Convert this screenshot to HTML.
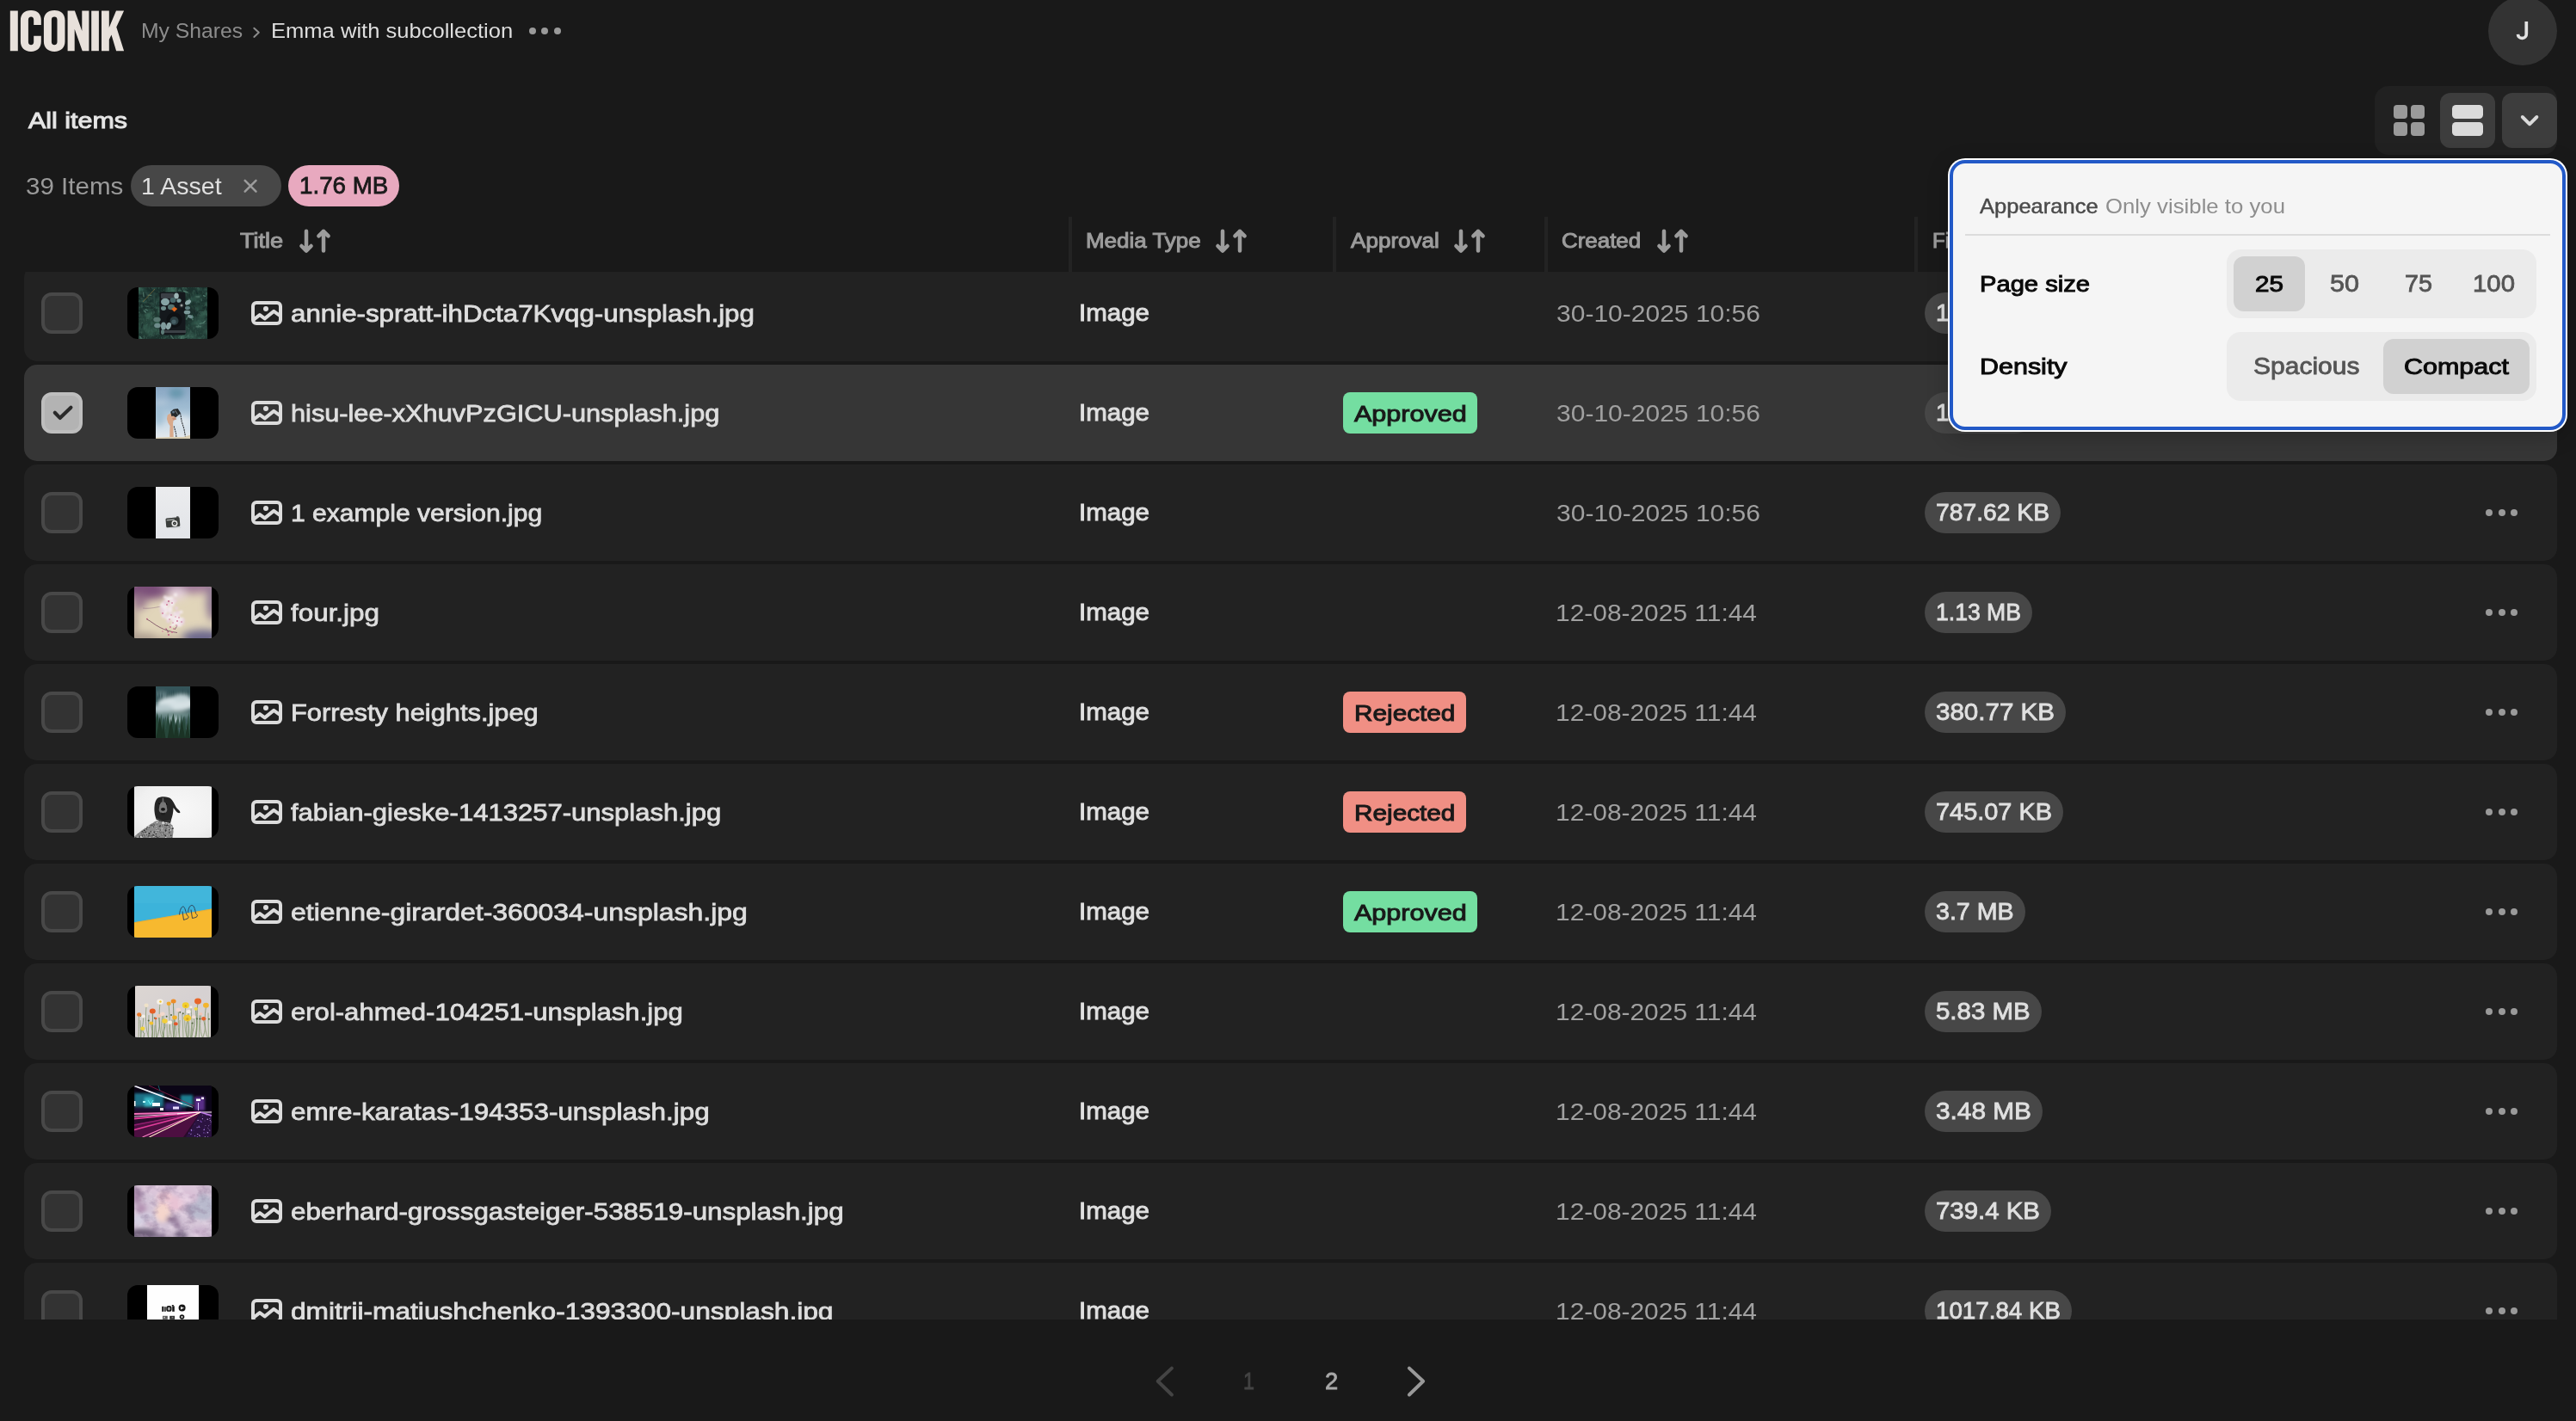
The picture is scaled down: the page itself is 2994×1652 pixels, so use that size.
<!DOCTYPE html>
<html><head><meta charset="utf-8"><title>iconik</title>
<style>
*{box-sizing:border-box;margin:0;padding:0}
html,body{width:2994px;height:1652px;overflow:hidden;background:#191919}
body{position:relative;font-family:"Liberation Sans",sans-serif;color:#dedede}
.t{position:absolute;white-space:nowrap;transform-origin:0 50%;line-height:60px;height:60px;font-size:28.5px}
.abs{position:absolute}
.w5{font-size:27.5px;-webkit-text-stroke:0.8px currentColor}
.w6{font-size:27.5px;-webkit-text-stroke:0.9px currentColor}
.w7{font-size:26.5px;-webkit-text-stroke:1px currentColor}
.f24{font-size:24.5px}
.f24.w5{font-size:24px;-webkit-text-stroke:0.45px currentColor}
.f24.w6{font-size:23.5px;-webkit-text-stroke:1px currentColor}
.row{position:absolute;left:28px;width:2944px;height:112px;background:#222;border-radius:15px}
.row.sel{background:#363636}
.cb{position:absolute;left:20px;top:32px;width:48px;height:48px;border-radius:12px;border:4px solid #484848;background:#333}
.sel .cb{border-color:#bebebe;background:#b3b3b3}
.th{position:absolute;left:120px;top:26px;width:106px;height:60px;border-radius:12px;background:#000;overflow:hidden}
.th svg{position:absolute;top:0;height:60px;display:block}
.ico{position:absolute;left:264px;top:42px;width:36px;height:28px}
.badge{position:absolute;left:1533px;top:32px;height:48px;border-radius:8px}
.ok{background:#74dea1;width:156px}
.no{background:#f08f84;width:143px}
.pill{position:absolute;left:2209px;top:32px;height:48px;border-radius:24px;background:#474747}
.dots{position:absolute;left:2861px;top:52px;width:38px;height:8px}
.dots i,.dots:before,.dots:after{content:"";position:absolute;top:0;width:8px;height:8px;border-radius:50%;background:#9a9a9a}
.dots:before{left:0}.dots i{left:14.5px}.dots:after{left:29px}
.sep{position:absolute;top:252px;width:4px;height:64px;background:#232323}
</style></head><body>

<svg class="abs" style="left:0;top:0" width="160" height="72" viewBox="0 0 160 72"><g fill="#e8e1db">
<path d="M11.8 12.6h9v46.6h-9z"/>
<path d="M36 11.9c7.6 0 11.8 4.4 11.8 11.6v5.600h-8.600v-6.100c0-2.200-1.100-3.400-3.100-3.400s-3.200 1.200-3.200 3.400v25.800c0 2.200 1.200 3.400 3.200 3.400s3.100-1.200 3.100-3.400v-7h8.600v6.500c0 7.200-4.200 11.600-11.800 11.600s-12.100-4.400-12.100-11.600v-24.800c0-7.200 4.500-11.600 12.100-11.600z"/>
<path d="M63.200 11.900c7.700 0 12.300 4.400 12.300 11.600v24.800c0 7.200-4.600 11.600-12.300 11.600s-12.300-4.400-12.300-11.600v-24.800c0-7.200 4.600-11.600 12.300-11.600zm0 7.700c-2.100 0-3.300 1.200-3.300 3.400v25.800c0 2.200 1.200 3.400 3.300 3.400s3.300-1.200 3.300-3.400v-25.800c0-2.200-1.200-3.400-3.300-3.400z" fill-rule="evenodd"/>
<path d="M78.600 12.600h8.300l8.400 23.400v-23.400h8.100v46.600h-7.700l-9-25.400v25.400h-8.100z"/>
<path d="M106.200 12.600h8.700v46.600h-8.700z"/>
<path d="M118 12.600h8.800v19.400l8.200-19.400h9.100l-8.800 18.800 8.800 27.800h-9l-5.600-18.800-2.700 5.600v13.200h-8.800z"/>
</g></svg>

<span id="bc1" class="t f24" style="left:164.0px;top:5.5px;transform:scaleX(1.0094);color:#8c8c8c;">My Shares</span>
<svg class="abs" style="left:290px;top:28px" width="16" height="20" viewBox="0 0 16 20"><path d="M5.300 4.700L10.800 9.800L5.300 14.900" fill="none" stroke="#8c8c8c" stroke-width="2" stroke-linecap="round" stroke-linejoin="round"/></svg>
<span id="bc2" class="t f24" style="left:315.3px;top:5.5px;transform:scaleX(1.0430);color:#dedede;">Emma with subcollection</span>
<div class="dots" style="left:614.800px;top:31.600px;width:37px"><i style="left:14.400px"></i></div>
<div class="abs" style="left:2892px;top:-4px;width:80px;height:80px;border-radius:50%;background:#333"></div>
<svg class="abs" style="left:2920px;top:20px" width="24" height="32" viewBox="0 0 24 32"><path d="M16.300 5.100V19.300A4.900 4.900 0 0 1 6.500 19.800" fill="none" stroke="#e2e2e2" stroke-width="3.700"/></svg>
<span id="all" class="t w7" style="left:33.0px;top:110.0px;transform:scaleX(1.1484);color:#e6e6e6;">All items</span>
<div class="abs" style="left:2760px;top:100px;width:212px;height:80px;border-radius:16px;background:#212121"></div>
<div class="abs" style="left:2836px;top:108px;width:64px;height:64px;border-radius:12px;background:#3d3d3d"></div>
<div class="abs" style="left:2908px;top:108px;width:64px;height:64px;border-radius:12px;background:#3d3d3d"></div>
<svg class="abs" style="left:2760px;top:100px" width="212" height="80" viewBox="0 0 212 80">
<g fill="#9a9a9a"><rect x="22" y="22" width="16" height="16" rx="4"/><rect x="42" y="22" width="16" height="16" rx="4"/><rect x="22" y="42" width="16" height="16" rx="4"/><rect x="42" y="42" width="16" height="16" rx="4"/></g>
<g fill="#dadada"><rect x="90" y="22" width="36" height="16" rx="4.500"/><rect x="90" y="42" width="36" height="16" rx="4.500"/></g>
<path d="M171.800 36l8.300 8.300 8.300-8.300" fill="none" stroke="#dadada" stroke-width="3.900" stroke-linecap="round" stroke-linejoin="round"/>
</svg>

<span id="n39" class="t " style="left:29.5px;top:186.0px;transform:scaleX(1.0375);color:#9a9a9a;">39 Items</span>
<div class="abs" style="left:152px;top:192px;width:175px;height:48px;border-radius:24px;background:#474747"></div>
<span id="asset" class="t " style="left:164.2px;top:186.0px;transform:scaleX(1.0023);color:#e0e0e0;">1 Asset</span>
<svg class="abs" style="left:281px;top:206px" width="20" height="20" viewBox="0 0 20 20"><path d="M3.700 3.800l12.800 12.800M16.500 3.800l-12.800 12.800" stroke="#9c9c9c" stroke-width="2.500" stroke-linecap="round"/></svg>
<div class="abs" style="left:335px;top:192px;width:129px;height:48px;border-radius:24px;background:#e8a9bf"></div>
<span id="mb" class="t w5" style="left:348.2px;top:186.0px;transform:scaleX(1.0086);color:#1a1a1a;">1.76 MB</span>
<div class="abs" style="left:0;top:316px;width:2994px;height:1218px;overflow:hidden">
<div class="row" style="top:-8px">
<div class="cb"></div>
<div class="th"><svg style="left:13px;width:80px" viewBox="0 0 80 60" preserveAspectRatio="none"><defs><filter id="ba1" x="-30%" y="-30%" width="160%" height="160%"><feGaussianBlur stdDeviation="4"/></filter><filter id="ba2" x="-30%" y="-30%" width="160%" height="160%"><feGaussianBlur stdDeviation="0.5"/></filter><filter id="ba3" x="-30%" y="-30%" width="160%" height="160%"><feGaussianBlur stdDeviation="0.45"/></filter><filter id="ta1" x="0" y="0" width="100%" height="100%" color-interpolation-filters="sRGB"><feTurbulence type="fractalNoise" baseFrequency=".09 .11" numOctaves="3" seed="4"/><feColorMatrix values="0 0 0 0 .23  0 0 0 0 .40  0 0 0 0 .34  2.600 0 0 0 -1.000"/></filter><filter id="ta2" x="0" y="0" width="100%" height="100%" color-interpolation-filters="sRGB"><feTurbulence type="turbulence" baseFrequency=".35 .2" numOctaves="2" seed="9"/><feColorMatrix values="0 0 0 0 .33  0 0 0 0 .50  0 0 0 0 .44  3 0 0 0 -.8"/></filter><clipPath id="cp80013"><rect width="80" height="60"/></clipPath></defs><g clip-path="url(#cp80013)"><rect width="80" height="60" fill="#1b302c"/><rect width="80" height="60" filter="url(#ta1)"/><rect width="80" height="60" filter="url(#ta2)" opacity=".4"/><g filter="url(#ba1)" opacity=".55"><ellipse cx="12" cy="44" rx="14" ry="14" fill="#31564a"/><ellipse cx="70" cy="46" rx="13" ry="13" fill="#2a4b42"/><ellipse cx="68" cy="12" rx="12" ry="8" fill="#244039"/><ellipse cx="14" cy="10" rx="10" ry="8" fill="#15292a"/><ellipse cx="62" cy="30" rx="8" ry="8" fill="#142825"/></g><g filter="url(#ba2)"><path d="M52.1 4.3l5.1 1.6" stroke="#507a6c" stroke-width="1.300"/><path d="M72.8 12.9l0.7 3.2" stroke="#3b5f54" stroke-width="1.300"/><path d="M7.3 25.5l3.6 1.5" stroke="#507a6c" stroke-width="1.300"/><path d="M50.2 56.9l-0.8 3.1" stroke="#507a6c" stroke-width="1.300"/><path d="M17.7 33.4l2.2 2.8" stroke="#2c4a42" stroke-width="1.300"/><path d="M9.4 18.5l4.5 2.9" stroke="#1a2f2b" stroke-width="1.300"/><path d="M43.8 3.8l-1.8 4.6" stroke="#3b5f54" stroke-width="1.300"/><path d="M37.2 55.4l3.6 5.0" stroke="#4a6e62" stroke-width="1.300"/><path d="M70.0 43.8l-1.1 3.1" stroke="#4a6e62" stroke-width="1.300"/><path d="M27.4 56.0l5.6 0.7" stroke="#24413a" stroke-width="1.300"/><path d="M61.2 34.4l2.1 3.9" stroke="#4a6e62" stroke-width="1.300"/><path d="M5.5 5.6l0.5 5.6" stroke="#4a6e62" stroke-width="1.300"/><path d="M4.9 42.1l-1.4 5.6" stroke="#1a2f2b" stroke-width="1.300"/><path d="M71.0 20.8l2.4 4.9" stroke="#24413a" stroke-width="1.300"/><path d="M23.0 44.3l2.2 6.1" stroke="#24413a" stroke-width="1.300"/><path d="M6.4 27.0l2.3 2.7" stroke="#507a6c" stroke-width="1.300"/><path d="M56.5 59.2l-6.4 2.4" stroke="#1a2f2b" stroke-width="1.300"/><path d="M12.1 10.6l-1.5 2.7" stroke="#2c4a42" stroke-width="1.300"/><path d="M66.5 10.9l4.7 0.1" stroke="#4a6e62" stroke-width="1.300"/><path d="M76.2 41.4l-5.5 0.9" stroke="#507a6c" stroke-width="1.300"/><path d="M59.2 27.4l-3.7 2.7" stroke="#1a2f2b" stroke-width="1.300"/><path d="M50.7 3.7l-4.8 0.2" stroke="#3b5f54" stroke-width="1.300"/><path d="M8.8 36.0l3.6 0.0" stroke="#3b5f54" stroke-width="1.300"/><path d="M8.1 21.8l3.7 0.8" stroke="#3b5f54" stroke-width="1.300"/><path d="M76.4 36.1l5.9 2.4" stroke="#24413a" stroke-width="1.300"/><path d="M79.4 28.0l2.0 3.0" stroke="#24413a" stroke-width="1.300"/><path d="M60.0 44.4l-3.1 1.9" stroke="#24413a" stroke-width="1.300"/><path d="M1.8 57.1l2.4 5.2" stroke="#507a6c" stroke-width="1.300"/><path d="M73.1 45.5l-6.4 0.4" stroke="#4a6e62" stroke-width="1.300"/><path d="M61.8 32.0l2.0 3.3" stroke="#507a6c" stroke-width="1.300"/><path d="M64.9 59.1l-5.1 3.6" stroke="#2c4a42" stroke-width="1.300"/><path d="M59.2 13.6l0.1 5.9" stroke="#507a6c" stroke-width="1.300"/><path d="M79.2 47.4l4.0 4.2" stroke="#24413a" stroke-width="1.300"/><path d="M76.5 26.8l-6.8 0.3" stroke="#1a2f2b" stroke-width="1.300"/><path d="M18.1 11.8l0.4 6.9" stroke="#2c4a42" stroke-width="1.300"/><path d="M48.8 0.1l2.6 4.9" stroke="#1a2f2b" stroke-width="1.300"/><path d="M66.8 7.2l-4.6 3.8" stroke="#24413a" stroke-width="1.300"/><path d="M63.1 20.0l1.5 4.4" stroke="#1a2f2b" stroke-width="1.300"/><path d="M75.7 43.5l-3.1 0.1" stroke="#2c4a42" stroke-width="1.300"/><path d="M75.0 9.4l2.8 1.2" stroke="#507a6c" stroke-width="1.300"/><path d="M77.7 39.0l-2.5 2.5" stroke="#507a6c" stroke-width="1.300"/><path d="M78.9 11.7l3.8 0.3" stroke="#2c4a42" stroke-width="1.300"/><path d="M66.7 3.7l2.1 4.3" stroke="#1a2f2b" stroke-width="1.300"/><path d="M46.7 54.3l-5.6 3.4" stroke="#24413a" stroke-width="1.300"/><path d="M10.5 9.1l4.8 0.3" stroke="#507a6c" stroke-width="1.300"/><path d="M14.6 0.2l4.2 2.5" stroke="#2c4a42" stroke-width="1.300"/><path d="M58.0 33.4l-2.8 4.3" stroke="#4a6e62" stroke-width="1.300"/></g><path d="M5 17l14-15" stroke="#7a6a3a" stroke-width="1" opacity=".8"/><rect x="24.500" y="5.500" width="30" height="50" rx="2" fill="#14181c"/><rect x="26" y="7" width="15" height="6" rx="1" fill="#3a3f45"/><rect x="28" y="50" width="27" height="3" fill="#3b4146"/><circle cx="41.500" cy="38" r="9" fill="#0e1114"/><circle cx="41.500" cy="39" r="5" fill="#2c3e42"/><circle cx="41" cy="40" r="2.600" fill="#476066"/><g filter="url(#ba3)"><ellipse cx="31" cy="17" rx="5" ry="4.200" fill="#86a3a4"/><ellipse cx="44" cy="10" rx="2.800" ry="3.600" fill="#9db5b6"/><ellipse cx="40" cy="15" rx="3.500" ry="3" fill="#49686a"/><ellipse cx="47" cy="15.500" rx="2.600" ry="2.300" fill="#7f9fa0"/><ellipse cx="38" cy="23" rx="4" ry="3.200" fill="#55736f"/><ellipse cx="29" cy="24.500" rx="3" ry="2.400" fill="#6d8b8a"/><ellipse cx="57.500" cy="17.500" rx="3.800" ry="2.400" fill="#8daaab" transform="rotate(-35 57.500 17.500)"/><ellipse cx="57" cy="24" rx="3" ry="2" fill="#5f7e80"/><ellipse cx="56.500" cy="29" rx="3.800" ry="2.300" fill="#7a9899"/><ellipse cx="60" cy="34" rx="3.200" ry="1.800" fill="#6f8d8e" transform="rotate(25 60 34)"/><ellipse cx="21.500" cy="37.500" rx="4.200" ry="2.800" fill="#58766f"/><ellipse cx="22" cy="44.500" rx="3.800" ry="2.800" fill="#6e8c8b"/><ellipse cx="29" cy="45" rx="3" ry="4.500" fill="#7f9a9c"/><ellipse cx="35" cy="45" rx="2.800" ry="4.200" fill="#8aa4a6" transform="rotate(20 35 45)"/><ellipse cx="28" cy="52" rx="2" ry="3" fill="#5d7b78"/></g><circle cx="50" cy="21" r="2.800" fill="#23282c"/><circle cx="50" cy="21" r="1.500" fill="#9a9f9c"/><path d="M38.200 25.300l3.600-2.600 3.400 2.300-3.600 3.500z" fill="#e2681d"/></g></svg></div>
<svg class="ico" viewBox="0 0 36 28"><rect x="2" y="2" width="32" height="24" rx="4" fill="none" stroke="#dcdcdc" stroke-width="4"/><circle cx="17" cy="9" r="3" fill="#dcdcdc"/><path d="M2.500 21.800l7.400-5.700 5.800 4.300 10.500-8.500 7.300 5.300" fill="none" stroke="#dcdcdc" stroke-width="4" stroke-linejoin="round"/></svg>
<span id="t_annie" class="t w5" style="left:310.0px;top:26.5px;transform:scaleX(1.1372);color:#dedede;">annie-spratt-ihDcta7Kvqg-unsplash.jpg</span>
<span id="m_annie" class="t w6" style="left:1226.0px;top:26.0px;transform:scaleX(1.0728);color:#e0e0e0;">Image</span>
<span id="d_annie" class="t " style="left:1780.5px;top:26.0px;transform:scaleX(1.0532);color:#a0a0a0;">30-10-2025 10:56</span>
<div class="pill" style="width:129.3px"></div>
<span id="p_annie" class="t w5" style="left:2222.0px;top:26.0px;transform:scaleX(1.0086);color:#e0e0e0;">1.76 MB</span>
<div class="dots"><i></i></div>
</div>
<div class="row sel" style="top:108px">
<div class="cb"><svg style="position:absolute;left:-4px;top:-4px" width="48" height="48" viewBox="0 0 48 48"><path d="M15.800 23.700L21.700 29.900L34.400 17.800" fill="none" stroke="#2a2a2a" stroke-width="4.200" stroke-linecap="round" stroke-linejoin="round"/></svg></div>
<div class="th"><svg style="left:33px;width:40px" viewBox="0 0 40 60" preserveAspectRatio="none"><defs><linearGradient id="gh" x1="0" y1="0" x2="0" y2="1"><stop offset="0" stop-color="#8aa7c3"/><stop offset=".4" stop-color="#9fbcd2"/><stop offset=".75" stop-color="#cfdde8"/><stop offset="1" stop-color="#e4e9ee"/></linearGradient><filter id="bh1" x="-30%" y="-30%" width="160%" height="160%"><feGaussianBlur stdDeviation="3"/></filter><clipPath id="cp40033"><rect width="40" height="60"/></clipPath></defs><g clip-path="url(#cp40033)"><rect width="40" height="60" fill="url(#gh)"/><g filter="url(#bh1)"><ellipse cx="24" cy="7" rx="9" ry="6" fill="#6797ad"/><ellipse cx="6" cy="18" rx="9" ry="3" fill="#b9cbdb" opacity=".8"/><ellipse cx="30" cy="40" rx="12" ry="6" fill="#e3ebf0" opacity=".8"/><ellipse cx="4" cy="36" rx="5" ry="10" fill="#8fb4cb" opacity=".6"/></g><path d="M16.300 60.500v-10l.3-5.200-2.300-3.800-1.400-4.600.8-4.300 2.800-1.800 4.600.6 2.300 2.800-.6 3-2.200 1.200-.6 4.300.4 4.600.3 13.200z" fill="#d8a98b"/><path d="M19 36l4-.8 1.200 2.300-3.800 1.300z" fill="#c58f78"/><path d="M17.200 28.800l3.500-3 5-.8 3.300 5.200-5.600 5-3.200-1.600-1.800.4z" fill="#25282b"/><circle cx="20.500" cy="29" r="1.500" fill="#5f7488"/><path d="M22.500 27l3 4.800" stroke="#7f8688" stroke-width="1"/><path d="M28.600 30.500l1.600 9.500 2.800 9 1.900 11M21.200 45.500l2.300 8 .6 7" stroke="#33363a" stroke-width="1.100" fill="none" stroke-dasharray="2 .7"/><path d="M0 60v-1.300l16-.7h16l8-2.200v4.200z" fill="#d9cdb2"/></g></svg></div>
<svg class="ico" viewBox="0 0 36 28"><rect x="2" y="2" width="32" height="24" rx="4" fill="none" stroke="#dcdcdc" stroke-width="4"/><circle cx="17" cy="9" r="3" fill="#dcdcdc"/><path d="M2.500 21.800l7.400-5.700 5.800 4.300 10.500-8.500 7.300 5.300" fill="none" stroke="#dcdcdc" stroke-width="4" stroke-linejoin="round"/></svg>
<span id="t_hisu" class="t w5" style="left:310.0px;top:26.5px;transform:scaleX(1.1165);color:#dedede;">hisu-lee-xXhuvPzGICU-unsplash.jpg</span>
<span id="m_hisu" class="t w6" style="left:1226.0px;top:26.0px;transform:scaleX(1.0728);color:#e0e0e0;">Image</span>
<div class="badge ok"></div>
<span id="a_hisu" class="t w7" style="left:1545.6px;top:26.6px;transform:scaleX(1.1520);color:#191919;">Approved</span>
<span id="d_hisu" class="t " style="left:1780.5px;top:26.0px;transform:scaleX(1.0532);color:#a0a0a0;">30-10-2025 10:56</span>
<div class="pill" style="width:129.3px"></div>
<span id="p_hisu" class="t w5" style="left:2222.0px;top:26.0px;transform:scaleX(1.0086);color:#e0e0e0;">1.76 MB</span>
<div class="dots"><i></i></div>
</div>
<div class="row" style="top:224px">
<div class="cb"></div>
<div class="th"><svg style="left:33px;width:40px" viewBox="0 0 40 60" preserveAspectRatio="none"><defs><linearGradient id="gx" x1="0" y1="0" x2="0" y2="1"><stop offset="0" stop-color="#ebecee"/><stop offset="1" stop-color="#e2e4e8"/></linearGradient><clipPath id="cp40033"><rect width="40" height="60"/></clipPath></defs><g clip-path="url(#cp40033)"><rect width="40" height="60" fill="url(#gx)"/><ellipse cx="20.500" cy="47" rx="9" ry="1.200" fill="#cfd2d6"/><g transform="rotate(-5 20 41)"><rect x="11.800" y="35.800" width="16.200" height="10.800" rx="1.400" fill="#3a3d3b"/><rect x="13" y="37.400" width="9" height="1.500" fill="#9ea2a0"/><rect x="24.500" y="34.800" width="2.500" height="1.300" fill="#2c2e2d"/><circle cx="21.800" cy="42.600" r="3.500" fill="#e6e7e6"/><circle cx="21.800" cy="42.600" r="2" fill="#2b2d2c"/><circle cx="21.800" cy="42.600" r=".8" fill="#8c9190"/></g></g></svg></div>
<svg class="ico" viewBox="0 0 36 28"><rect x="2" y="2" width="32" height="24" rx="4" fill="none" stroke="#dcdcdc" stroke-width="4"/><circle cx="17" cy="9" r="3" fill="#dcdcdc"/><path d="M2.500 21.800l7.400-5.700 5.800 4.300 10.500-8.500 7.300 5.300" fill="none" stroke="#dcdcdc" stroke-width="4" stroke-linejoin="round"/></svg>
<span id="t_ex" class="t w5" style="left:310.0px;top:26.5px;transform:scaleX(1.0923);color:#dedede;">1 example version.jpg</span>
<span id="m_ex" class="t w6" style="left:1226.0px;top:26.0px;transform:scaleX(1.0728);color:#e0e0e0;">Image</span>
<span id="d_ex" class="t " style="left:1780.5px;top:26.0px;transform:scaleX(1.0532);color:#a0a0a0;">30-10-2025 10:56</span>
<div class="pill" style="width:158.0px"></div>
<span id="p_ex" class="t w5" style="left:2222.0px;top:26.0px;transform:scaleX(1.0277);color:#e0e0e0;">787.62 KB</span>
<div class="dots"><i></i></div>
</div>
<div class="row" style="top:340px">
<div class="cb"></div>
<div class="th"><svg style="left:8px;width:90px" viewBox="0 0 90 60" preserveAspectRatio="none"><defs><filter id="bf1" x="-30%" y="-30%" width="160%" height="160%"><feGaussianBlur stdDeviation="5"/></filter><filter id="bf2" x="-30%" y="-30%" width="160%" height="160%"><feGaussianBlur stdDeviation="0.9"/></filter><filter id="bf3" x="-30%" y="-30%" width="160%" height="160%"><feGaussianBlur stdDeviation="0.35"/></filter><clipPath id="cp90008"><rect width="90" height="60"/></clipPath></defs><g clip-path="url(#cp90008)"><rect width="90" height="60" fill="#e1d5ba"/><g filter="url(#bf1)"><ellipse cx="14" cy="2" rx="30" ry="13" fill="#7b4f79"/><ellipse cx="64" cy="-2" rx="34" ry="10" fill="#a17b9a"/><ellipse cx="6" cy="18" rx="9" ry="9" fill="#9b7a8f"/><ellipse cx="91" cy="18" rx="7" ry="22" fill="#8d7792"/><ellipse cx="80" cy="60" rx="26" ry="10" fill="#6c688c"/><ellipse cx="8" cy="62" rx="22" ry="8" fill="#a99a8d"/><ellipse cx="40" cy="64" rx="20" ry="6" fill="#b7a795"/><ellipse cx="50" cy="8" rx="10" ry="7" fill="#e6d2dd"/><ellipse cx="-2" cy="40" rx="5" ry="16" fill="#a8968f"/></g><path d="M14 37.500c6 3 10 7 16 10s12 5 20 6M47 50l4-6M40 53l-3-4" stroke="#7a4f63" stroke-width="1" fill="none" opacity=".85"/><path d="M10 25c8 1 16-1 26-3" stroke="#8c6a83" stroke-width=".8" fill="none" opacity=".6"/><g filter="url(#bf2)"><circle cx="36.2" cy="18.3" r="2.7" fill="#e9d3de"/><circle cx="33.7" cy="19.1" r="1.8" fill="#e9d3de"/><circle cx="36.3" cy="12.4" r="1.7" fill="#f6eef0"/><circle cx="44.1" cy="20.5" r="2.7" fill="#f3e8ea"/><circle cx="37.8" cy="15.0" r="2.1" fill="#efe0e6"/><circle cx="35.7" cy="12.3" r="1.7" fill="#f3e8ea"/><circle cx="42.1" cy="19.5" r="1.6" fill="#e9d3de"/><circle cx="38.6" cy="21.2" r="1.8" fill="#efe0e6"/><circle cx="38.1" cy="13.8" r="2.4" fill="#e9d3de"/><circle cx="38.8" cy="14.0" r="2.3" fill="#f3e8ea"/><circle cx="40.1" cy="14.0" r="1.9" fill="#f6eef0"/><circle cx="45.9" cy="17.9" r="1.7" fill="#f3e8ea"/><circle cx="43.2" cy="14.1" r="2.7" fill="#f3e8ea"/><circle cx="43.0" cy="25.0" r="1.7" fill="#e9d3de"/><circle cx="44.9" cy="16.6" r="1.7" fill="#efe0e6"/><circle cx="41.6" cy="14.2" r="1.7" fill="#f6eef0"/><circle cx="45.0" cy="17.3" r="2.7" fill="#efe0e6"/><circle cx="41.0" cy="18.6" r="1.7" fill="#e9d3de"/><circle cx="43.2" cy="21.1" r="2.1" fill="#efe0e6"/><circle cx="47.7" cy="16.4" r="2.1" fill="#e9d3de"/><circle cx="44.0" cy="19.5" r="1.9" fill="#f6eef0"/><circle cx="48.0" cy="9.7" r="2.3" fill="#f3e8ea"/><circle cx="47.2" cy="39.5" r="2.6" fill="#f3e8ea"/><circle cx="48.8" cy="35.7" r="2.1" fill="#f3e8ea"/><circle cx="46.6" cy="30.9" r="2.0" fill="#f3e8ea"/><circle cx="49.1" cy="36.4" r="2.4" fill="#f3e8ea"/><circle cx="42.0" cy="32.3" r="2.1" fill="#e9d3de"/><circle cx="47.4" cy="32.8" r="2.1" fill="#efe0e6"/><circle cx="44.6" cy="38.1" r="2.3" fill="#efe0e6"/><circle cx="49.9" cy="40.5" r="2.3" fill="#e9d3de"/><circle cx="51.1" cy="30.7" r="2.1" fill="#f3e8ea"/><circle cx="50.7" cy="38.5" r="1.9" fill="#e9d3de"/><circle cx="45.6" cy="43.7" r="2.3" fill="#f6eef0"/><circle cx="34.4" cy="33.6" r="2.8" fill="#efe0e6"/><circle cx="46.9" cy="40.9" r="2.6" fill="#f3e8ea"/><circle cx="43.9" cy="45.3" r="1.8" fill="#f3e8ea"/><circle cx="50.8" cy="37.0" r="1.9" fill="#f3e8ea"/><circle cx="48.2" cy="39.0" r="2.3" fill="#efe0e6"/><circle cx="48.3" cy="36.4" r="2.1" fill="#f6eef0"/><circle cx="41.7" cy="29.0" r="2.3" fill="#efe0e6"/><circle cx="36.2" cy="29.3" r="2.2" fill="#f6eef0"/><circle cx="42.0" cy="23.6" r="1.6" fill="#f3e8ea"/><circle cx="37.8" cy="35.8" r="2.0" fill="#f3e8ea"/><circle cx="51.7" cy="37.7" r="2.5" fill="#efe0e6"/><circle cx="49.0" cy="25.0" r="2.0" fill="#e9d3de"/><circle cx="54.4" cy="29.5" r="2.1" fill="#f3e8ea"/><circle cx="50.4" cy="30.4" r="2.3" fill="#e9d3de"/><circle cx="45.4" cy="35.5" r="1.7" fill="#f3e8ea"/><circle cx="35.7" cy="23.6" r="2.7" fill="#f6eef0"/><circle cx="39.6" cy="39.9" r="2.3" fill="#e9d3de"/><circle cx="39.8" cy="36.4" r="2.2" fill="#f3e8ea"/><circle cx="45.2" cy="36.9" r="1.6" fill="#f3e8ea"/><circle cx="39.0" cy="35.1" r="2.7" fill="#f6eef0"/><circle cx="49.9" cy="32.3" r="1.8" fill="#efe0e6"/><circle cx="37.5" cy="34.1" r="2.0" fill="#e9d3de"/><circle cx="42.2" cy="35.0" r="2.1" fill="#f6eef0"/><circle cx="54.0" cy="42.8" r="2.6" fill="#efe0e6"/><circle cx="55.2" cy="38.1" r="2.3" fill="#f6eef0"/><circle cx="53.4" cy="41.4" r="2.0" fill="#f3e8ea"/><circle cx="51.2" cy="33.5" r="1.9" fill="#efe0e6"/><circle cx="55.6" cy="42.0" r="2.7" fill="#e9d3de"/><circle cx="50.3" cy="42.2" r="2.4" fill="#e9d3de"/><circle cx="50.6" cy="44.7" r="1.9" fill="#f3e8ea"/><circle cx="51.9" cy="38.0" r="2.0" fill="#f3e8ea"/><circle cx="51.1" cy="37.8" r="1.8" fill="#f6eef0"/><circle cx="53.1" cy="41.5" r="1.7" fill="#f3e8ea"/><circle cx="49.0" cy="41.3" r="2.4" fill="#f6eef0"/><circle cx="57.4" cy="38.9" r="1.8" fill="#e9d3de"/><circle cx="52.8" cy="44.3" r="2.5" fill="#f3e8ea"/><circle cx="54.0" cy="42.0" r="2.0" fill="#efe0e6"/><circle cx="32.5" cy="23.8" r="2.7" fill="#f3e8ea"/><circle cx="31.8" cy="23.9" r="2.1" fill="#e9d3de"/><circle cx="32.6" cy="22.7" r="2.7" fill="#e9d3de"/><circle cx="32.5" cy="21.3" r="2.2" fill="#f6eef0"/><circle cx="32.5" cy="22.5" r="1.8" fill="#f3e8ea"/><circle cx="35.9" cy="25.4" r="2.8" fill="#f6eef0"/><circle cx="36.9" cy="26.3" r="2.0" fill="#f3e8ea"/><circle cx="39.6" cy="27.6" r="2.1" fill="#e9d3de"/><circle cx="40.2" cy="25.1" r="1.6" fill="#f3e8ea"/><circle cx="39.6" cy="27.2" r="2.2" fill="#efe0e6"/><circle cx="32.6" cy="28.3" r="2.7" fill="#e9d3de"/><circle cx="42.0" cy="26.4" r="2.7" fill="#f3e8ea"/></g><g filter="url(#bf3)"><circle cx="40.0" cy="17.0" r="0.9" fill="#bd5580"/><circle cx="44.0" cy="19.0" r="0.8" fill="#bd5580"/><circle cx="38.0" cy="21.0" r="1.0" fill="#d27a9b"/><circle cx="33.0" cy="31.0" r="0.9" fill="#d27a9b"/><circle cx="43.0" cy="33.0" r="0.8" fill="#d27a9b"/><circle cx="48.0" cy="35.0" r="0.7" fill="#d27a9b"/><circle cx="52.0" cy="36.0" r="0.8" fill="#d27a9b"/><circle cx="41.0" cy="38.0" r="0.7" fill="#c76089"/><circle cx="50.0" cy="40.0" r="1.0" fill="#d27a9b"/><circle cx="55.0" cy="41.0" r="0.7" fill="#bd5580"/><circle cx="45.0" cy="42.0" r="0.7" fill="#d27a9b"/><circle cx="49.0" cy="45.0" r="0.7" fill="#c76089"/><circle cx="42.0" cy="47.0" r="0.9" fill="#c76089"/><circle cx="37.0" cy="49.0" r="0.8" fill="#c76089"/><circle cx="46.0" cy="49.0" r="0.8" fill="#bd5580"/><circle cx="33.0" cy="52.0" r="0.8" fill="#d27a9b"/><circle cx="39.0" cy="53.0" r="0.7" fill="#c76089"/><circle cx="44.0" cy="53.0" r="0.9" fill="#c76089"/><circle cx="40.0" cy="56.0" r="1.0" fill="#bd5580"/><circle cx="15.0" cy="37.5" r="0.8" fill="#bd5580"/></g></g></svg></div>
<svg class="ico" viewBox="0 0 36 28"><rect x="2" y="2" width="32" height="24" rx="4" fill="none" stroke="#dcdcdc" stroke-width="4"/><circle cx="17" cy="9" r="3" fill="#dcdcdc"/><path d="M2.500 21.800l7.400-5.700 5.800 4.300 10.500-8.500 7.300 5.300" fill="none" stroke="#dcdcdc" stroke-width="4" stroke-linejoin="round"/></svg>
<span id="t_four" class="t w5" style="left:310.0px;top:26.5px;transform:scaleX(1.1417);color:#dedede;">four.jpg</span>
<span id="m_four" class="t w6" style="left:1226.0px;top:26.0px;transform:scaleX(1.0728);color:#e0e0e0;">Image</span>
<span id="d_four" class="t " style="left:1779.6px;top:26.0px;transform:scaleX(1.0497);color:#a0a0a0;">12-08-2025 11:44</span>
<div class="pill" style="width:125.0px"></div>
<span id="p_four" class="t w5" style="left:2222.0px;top:26.0px;transform:scaleX(0.9666);color:#e0e0e0;">1.13 MB</span>
<div class="dots"><i></i></div>
</div>
<div class="row" style="top:456px">
<div class="cb"></div>
<div class="th"><svg style="left:33px;width:40px" viewBox="0 0 40 60" preserveAspectRatio="none"><defs><filter id="br1" x="-30%" y="-30%" width="160%" height="160%"><feGaussianBlur stdDeviation="2.2"/></filter><filter id="br2" x="-30%" y="-30%" width="160%" height="160%"><feGaussianBlur stdDeviation="0.6"/></filter><clipPath id="cp40033"><rect width="40" height="60"/></clipPath></defs><g clip-path="url(#cp40033)"><rect width="40" height="60" fill="#3f5d5f"/><g filter="url(#br1)"><rect x="-5" y="-4" width="50" height="12" fill="#36545a"/><ellipse cx="6" cy="10" rx="8" ry="4" fill="#5e7c80"/></g><g filter="url(#br2)" opacity=".55"><path d="M0.8 2.6l2.3 15.4h-4.5z" fill="#27454a"/><path d="M3.9 3.5l2.1 14.5h-4.2z" fill="#27454a"/><path d="M7.1 5.1l1.8 12.9h-3.5z" fill="#27454a"/><path d="M13.2 5.3l1.7 12.7h-3.5z" fill="#27454a"/><path d="M15.4 4.4l1.9 13.6h-3.8z" fill="#27454a"/><path d="M18.2 4.3l1.9 13.7h-3.9z" fill="#27454a"/><path d="M20.7 3.1l2.2 14.9h-4.4z" fill="#27454a"/><path d="M23.8 5.2l1.8 12.8h-3.5z" fill="#27454a"/><path d="M26.9 5.1l1.8 12.9h-3.6z" fill="#27454a"/><path d="M31.4 2.8l2.2 15.2h-4.5z" fill="#27454a"/><path d="M34.6 5.6l1.7 12.4h-3.4z" fill="#27454a"/><path d="M37.6 2.5l2.3 15.5h-4.6z" fill="#27454a"/></g><g filter="url(#br1)"><ellipse cx="24" cy="20" rx="22" ry="8.500" fill="#d5e1e4"/><ellipse cx="8" cy="26" rx="12" ry="5" fill="#b7c9cd"/><ellipse cx="30" cy="13" rx="10" ry="4" fill="#c3d3d7"/><ellipse cx="20" cy="33" rx="24" ry="4" fill="#6d8a88"/><ellipse cx="22" cy="40" rx="8" ry="5" fill="#9fb6b6"/></g><g filter="url(#br2)"><path d="M1.4 32.1l2.4 15.9h-4.8z" fill="#34544a"/><path d="M6.3 31.9l2.4 16.1h-4.9z" fill="#34544a"/><path d="M11.5 34.1l2.0 13.9h-4.0z" fill="#34544a"/><path d="M14.1 30.9l2.6 17.1h-5.2z" fill="#34544a"/><path d="M19.3 33.4l2.1 14.6h-4.2z" fill="#34544a"/><path d="M25.9 32.4l2.3 15.6h-4.6z" fill="#34544a"/><path d="M29.9 32.4l2.3 15.6h-4.6z" fill="#34544a"/><path d="M33.8 33.8l2.0 14.2h-4.1z" fill="#34544a"/><path d="M38.2 30.8l2.6 17.2h-5.3z" fill="#34544a"/></g><path d="M1.8 30.4l5.9 33.6h-11.8z" fill="#27473a"/><path d="M9.4 36.0l4.8 28.0h-9.6z" fill="#27473a"/><path d="M14.3 34.2l5.2 29.8h-10.3z" fill="#27473a"/><path d="M20.5 30.9l5.8 33.1h-11.6z" fill="#27473a"/><path d="M24.5 38.1l4.4 25.9h-8.7z" fill="#27473a"/><path d="M32.4 34.3l5.1 29.7h-10.3z" fill="#27473a"/><path d="M37.9 38.4l4.3 25.6h-8.6z" fill="#27473a"/><path d="M4.7 35.4l6.1 34.6h-12.2z" fill="#1b3325"/><path d="M8.7 43.6l4.5 26.4h-9.0z" fill="#1b3325"/><path d="M17.7 37.4l5.7 32.6h-11.4z" fill="#1b3325"/><path d="M23.8 41.5l4.9 28.5h-9.8z" fill="#1b3325"/><path d="M30.3 38.7l5.5 31.3h-10.9z" fill="#1b3325"/><path d="M36.9 42.9l4.6 27.1h-9.2z" fill="#1b3325"/></g></svg></div>
<svg class="ico" viewBox="0 0 36 28"><rect x="2" y="2" width="32" height="24" rx="4" fill="none" stroke="#dcdcdc" stroke-width="4"/><circle cx="17" cy="9" r="3" fill="#dcdcdc"/><path d="M2.500 21.800l7.400-5.700 5.800 4.300 10.500-8.500 7.300 5.300" fill="none" stroke="#dcdcdc" stroke-width="4" stroke-linejoin="round"/></svg>
<span id="t_forr" class="t w5" style="left:310.0px;top:26.5px;transform:scaleX(1.1203);color:#dedede;">Forresty heights.jpeg</span>
<span id="m_forr" class="t w6" style="left:1226.0px;top:26.0px;transform:scaleX(1.0728);color:#e0e0e0;">Image</span>
<div class="badge no"></div>
<span id="a_forr" class="t w7" style="left:1545.8px;top:26.6px;transform:scaleX(1.1224);color:#191919;">Rejected</span>
<span id="d_forr" class="t " style="left:1779.6px;top:26.0px;transform:scaleX(1.0497);color:#a0a0a0;">12-08-2025 11:44</span>
<div class="pill" style="width:164.0px"></div>
<span id="p_forr" class="t w5" style="left:2222.0px;top:26.0px;transform:scaleX(1.0745);color:#e0e0e0;">380.77 KB</span>
<div class="dots"><i></i></div>
</div>
<div class="row" style="top:572px">
<div class="cb"></div>
<div class="th"><svg style="left:8px;width:90px" viewBox="0 0 90 60" preserveAspectRatio="none"><defs><radialGradient id="gd" cx=".55" cy=".45" r=".75"><stop offset="0" stop-color="#f8f8f8"/><stop offset=".7" stop-color="#f0f0f0"/><stop offset="1" stop-color="#e4e4e4"/></radialGradient><clipPath id="cp90008"><rect width="90" height="60"/></clipPath></defs><g clip-path="url(#cp90008)"><rect width="90" height="60" fill="url(#gd)"/><path d="M0 60v-1.500l8-6.500 8-6 8-5 4-1.500 14 3.500 3 4 .5 6-1 7z" fill="#8b8b8b"/><circle cx="21.3" cy="46.2" r="0.4" fill="#5e5e5e"/><circle cx="25.5" cy="51.6" r="0.4" fill="#e8e8e8"/><circle cx="7.8" cy="58.8" r="0.8" fill="#e8e8e8"/><circle cx="42.5" cy="51.0" r="0.7" fill="#e8e8e8"/><circle cx="36.3" cy="57.5" r="0.8" fill="#4a4a4a"/><circle cx="31.0" cy="54.0" r="0.6" fill="#2e2e2e"/><circle cx="35.5" cy="58.1" r="0.5" fill="#cfcfcf"/><circle cx="37.2" cy="42.4" r="0.8" fill="#e8e8e8"/><circle cx="19.5" cy="57.9" r="0.4" fill="#1f1f1f"/><circle cx="9.1" cy="56.7" r="0.5" fill="#2e2e2e"/><circle cx="6.1" cy="58.2" r="0.6" fill="#1f1f1f"/><circle cx="22.9" cy="58.3" r="0.6" fill="#e8e8e8"/><circle cx="8.8" cy="54.8" r="0.7" fill="#4a4a4a"/><circle cx="25.5" cy="51.3" r="0.4" fill="#cfcfcf"/><circle cx="33.9" cy="50.7" r="0.4" fill="#5e5e5e"/><circle cx="18.5" cy="57.9" r="0.4" fill="#1f1f1f"/><circle cx="31.0" cy="51.0" r="0.7" fill="#2e2e2e"/><circle cx="40.6" cy="46.0" r="0.5" fill="#4a4a4a"/><circle cx="15.1" cy="47.5" r="0.5" fill="#e8e8e8"/><circle cx="12.4" cy="55.9" r="0.5" fill="#cfcfcf"/><circle cx="4.7" cy="55.3" r="0.4" fill="#1f1f1f"/><circle cx="37.1" cy="48.9" r="0.7" fill="#4a4a4a"/><circle cx="29.8" cy="40.1" r="0.7" fill="#1f1f1f"/><circle cx="17.2" cy="56.9" r="0.5" fill="#5e5e5e"/><circle cx="13.4" cy="53.2" r="0.8" fill="#2e2e2e"/><circle cx="2.3" cy="59.5" r="0.4" fill="#4a4a4a"/><circle cx="28.1" cy="59.3" r="0.5" fill="#4a4a4a"/><circle cx="22.1" cy="44.1" r="0.8" fill="#5e5e5e"/><circle cx="25.6" cy="53.3" r="0.4" fill="#e8e8e8"/><circle cx="36.6" cy="50.9" r="0.8" fill="#5e5e5e"/><circle cx="32.9" cy="55.0" r="0.8" fill="#e8e8e8"/><circle cx="16.0" cy="58.3" r="0.5" fill="#4a4a4a"/><circle cx="25.7" cy="46.5" r="0.4" fill="#e8e8e8"/><circle cx="27.3" cy="43.8" r="0.4" fill="#5e5e5e"/><circle cx="1.3" cy="59.8" r="0.8" fill="#1f1f1f"/><circle cx="14.2" cy="49.6" r="0.7" fill="#2e2e2e"/><circle cx="40.4" cy="50.6" r="0.8" fill="#2e2e2e"/><circle cx="33.3" cy="53.9" r="0.4" fill="#5e5e5e"/><circle cx="40.9" cy="54.0" r="0.7" fill="#2e2e2e"/><circle cx="17.2" cy="57.3" r="0.5" fill="#5e5e5e"/><circle cx="26.4" cy="48.9" r="0.5" fill="#1f1f1f"/><circle cx="27.5" cy="51.5" r="0.7" fill="#e8e8e8"/><circle cx="28.7" cy="50.0" r="0.6" fill="#5e5e5e"/><circle cx="35.7" cy="45.3" r="0.7" fill="#2e2e2e"/><circle cx="21.3" cy="47.9" r="0.4" fill="#e8e8e8"/><circle cx="10.6" cy="55.2" r="0.4" fill="#4a4a4a"/><circle cx="9.2" cy="57.2" r="0.4" fill="#2e2e2e"/><circle cx="11.8" cy="49.4" r="0.4" fill="#e8e8e8"/><circle cx="11.7" cy="51.4" r="0.8" fill="#1f1f1f"/><circle cx="11.6" cy="56.7" r="0.7" fill="#4a4a4a"/><circle cx="29.4" cy="53.0" r="0.4" fill="#2e2e2e"/><circle cx="36.8" cy="59.5" r="0.7" fill="#e8e8e8"/><circle cx="42.8" cy="57.3" r="0.8" fill="#2e2e2e"/><circle cx="19.2" cy="45.1" r="0.6" fill="#e8e8e8"/><circle cx="13.8" cy="48.3" r="0.8" fill="#e8e8e8"/><circle cx="18.5" cy="45.2" r="0.4" fill="#1f1f1f"/><circle cx="16.8" cy="57.7" r="0.8" fill="#2e2e2e"/><circle cx="15.5" cy="47.8" r="0.7" fill="#5e5e5e"/><circle cx="33.7" cy="42.6" r="0.6" fill="#cfcfcf"/><circle cx="33.5" cy="54.8" r="0.7" fill="#1f1f1f"/><circle cx="13.1" cy="49.7" r="0.4" fill="#2e2e2e"/><circle cx="31.9" cy="49.2" r="0.7" fill="#e8e8e8"/><circle cx="29.9" cy="46.7" r="0.8" fill="#1f1f1f"/><circle cx="39.9" cy="49.2" r="0.5" fill="#cfcfcf"/><circle cx="9.3" cy="58.1" r="0.6" fill="#1f1f1f"/><circle cx="35.7" cy="41.9" r="0.4" fill="#cfcfcf"/><circle cx="22.0" cy="57.0" r="0.7" fill="#2e2e2e"/><circle cx="20.8" cy="53.0" r="0.5" fill="#cfcfcf"/><circle cx="26.6" cy="49.8" r="0.8" fill="#2e2e2e"/><circle cx="20.9" cy="45.5" r="0.7" fill="#4a4a4a"/><circle cx="9.3" cy="53.1" r="0.6" fill="#1f1f1f"/><circle cx="32.9" cy="48.9" r="0.4" fill="#e8e8e8"/><circle cx="40.8" cy="47.6" r="0.7" fill="#4a4a4a"/><circle cx="25.6" cy="58.2" r="0.8" fill="#2e2e2e"/><circle cx="41.0" cy="43.7" r="0.5" fill="#e8e8e8"/><circle cx="24.4" cy="58.5" r="0.6" fill="#5e5e5e"/><circle cx="10.3" cy="60.0" r="0.4" fill="#5e5e5e"/><circle cx="39.3" cy="50.8" r="0.5" fill="#cfcfcf"/><circle cx="18.7" cy="55.2" r="0.6" fill="#5e5e5e"/><circle cx="9.2" cy="52.7" r="0.6" fill="#1f1f1f"/><circle cx="17.5" cy="54.7" r="0.8" fill="#1f1f1f"/><circle cx="44.2" cy="46.7" r="0.5" fill="#e8e8e8"/><circle cx="34.4" cy="56.4" r="0.7" fill="#1f1f1f"/><circle cx="4.4" cy="59.2" r="0.6" fill="#cfcfcf"/><circle cx="17.2" cy="55.0" r="0.8" fill="#1f1f1f"/><circle cx="14.3" cy="56.7" r="0.5" fill="#2e2e2e"/><circle cx="9.1" cy="53.9" r="0.5" fill="#cfcfcf"/><circle cx="29.3" cy="58.6" r="0.5" fill="#5e5e5e"/><circle cx="16.0" cy="50.3" r="0.4" fill="#5e5e5e"/><circle cx="32.7" cy="45.9" r="0.6" fill="#5e5e5e"/><circle cx="18.8" cy="47.4" r="0.4" fill="#4a4a4a"/><circle cx="26.3" cy="49.2" r="0.8" fill="#cfcfcf"/><circle cx="32.3" cy="42.2" r="0.7" fill="#5e5e5e"/><circle cx="23.7" cy="57.7" r="0.4" fill="#1f1f1f"/><circle cx="14.4" cy="48.1" r="0.5" fill="#1f1f1f"/><circle cx="19.5" cy="54.7" r="0.4" fill="#cfcfcf"/><circle cx="37.8" cy="53.0" r="0.5" fill="#cfcfcf"/><circle cx="16.8" cy="46.2" r="0.8" fill="#e8e8e8"/><circle cx="23.4" cy="54.1" r="0.4" fill="#2e2e2e"/><circle cx="36.7" cy="52.2" r="0.6" fill="#2e2e2e"/><circle cx="26.9" cy="59.6" r="0.6" fill="#1f1f1f"/><circle cx="26.6" cy="42.4" r="0.7" fill="#e8e8e8"/><circle cx="23.3" cy="53.2" r="0.8" fill="#2e2e2e"/><circle cx="24.2" cy="52.6" r="0.4" fill="#5e5e5e"/><circle cx="33.6" cy="55.8" r="0.6" fill="#cfcfcf"/><circle cx="45.1" cy="49.1" r="0.8" fill="#2e2e2e"/><circle cx="27.2" cy="52.0" r="0.6" fill="#2e2e2e"/><circle cx="38.7" cy="45.4" r="0.7" fill="#4a4a4a"/><circle cx="27.0" cy="49.7" r="0.4" fill="#5e5e5e"/><circle cx="22.5" cy="47.1" r="0.6" fill="#2e2e2e"/><circle cx="13.1" cy="53.4" r="0.4" fill="#1f1f1f"/><circle cx="32.2" cy="54.8" r="0.4" fill="#2e2e2e"/><circle cx="38.8" cy="45.3" r="0.7" fill="#1f1f1f"/><circle cx="43.8" cy="60.0" r="0.5" fill="#4a4a4a"/><circle cx="7.4" cy="59.6" r="0.7" fill="#cfcfcf"/><circle cx="36.0" cy="58.5" r="0.5" fill="#2e2e2e"/><circle cx="36.6" cy="51.4" r="0.8" fill="#2e2e2e"/><circle cx="23.5" cy="59.7" r="0.4" fill="#5e5e5e"/><circle cx="40.6" cy="50.6" r="0.4" fill="#5e5e5e"/><circle cx="39.8" cy="44.3" r="0.6" fill="#cfcfcf"/><circle cx="35.8" cy="47.8" r="0.4" fill="#2e2e2e"/><circle cx="12.2" cy="59.7" r="0.4" fill="#4a4a4a"/><circle cx="10.3" cy="53.6" r="0.8" fill="#5e5e5e"/><circle cx="8.9" cy="59.3" r="0.7" fill="#e8e8e8"/><circle cx="11.3" cy="53.3" r="0.5" fill="#4a4a4a"/><circle cx="33.5" cy="42.0" r="0.4" fill="#1f1f1f"/><circle cx="17.6" cy="48.0" r="0.4" fill="#2e2e2e"/><circle cx="37.2" cy="46.5" r="0.6" fill="#cfcfcf"/><circle cx="37.2" cy="45.9" r="0.8" fill="#2e2e2e"/><circle cx="26.0" cy="58.8" r="0.7" fill="#5e5e5e"/><circle cx="20.6" cy="57.7" r="0.8" fill="#5e5e5e"/><circle cx="20.8" cy="53.1" r="0.5" fill="#cfcfcf"/><circle cx="41.0" cy="53.0" r="0.4" fill="#2e2e2e"/><circle cx="28.8" cy="46.9" r="0.6" fill="#5e5e5e"/><circle cx="31.7" cy="50.9" r="0.6" fill="#e8e8e8"/><circle cx="26.6" cy="44.2" r="0.4" fill="#4a4a4a"/><circle cx="36.0" cy="57.2" r="0.7" fill="#1f1f1f"/><circle cx="30.3" cy="45.8" r="0.8" fill="#4a4a4a"/><circle cx="22.1" cy="56.7" r="0.7" fill="#2e2e2e"/><circle cx="34.2" cy="56.5" r="0.5" fill="#5e5e5e"/><circle cx="25.3" cy="55.6" r="0.7" fill="#1f1f1f"/><circle cx="38.2" cy="42.1" r="0.6" fill="#cfcfcf"/><circle cx="27.2" cy="40.2" r="0.8" fill="#cfcfcf"/><circle cx="35.3" cy="43.7" r="0.4" fill="#cfcfcf"/><circle cx="32.0" cy="56.8" r="0.7" fill="#5e5e5e"/><circle cx="36.3" cy="43.2" r="0.4" fill="#2e2e2e"/><circle cx="19.6" cy="53.6" r="0.5" fill="#2e2e2e"/><circle cx="6.0" cy="59.9" r="0.7" fill="#1f1f1f"/><circle cx="31.7" cy="49.7" r="0.5" fill="#5e5e5e"/><circle cx="27.6" cy="51.0" r="0.5" fill="#e8e8e8"/><circle cx="21.7" cy="42.6" r="0.6" fill="#e8e8e8"/><circle cx="44.5" cy="49.3" r="0.5" fill="#1f1f1f"/><circle cx="43.5" cy="59.3" r="0.5" fill="#5e5e5e"/><circle cx="18.2" cy="59.9" r="0.8" fill="#cfcfcf"/><circle cx="33.3" cy="51.0" r="0.4" fill="#e8e8e8"/><circle cx="16.7" cy="57.3" r="0.7" fill="#5e5e5e"/><circle cx="15.4" cy="54.7" r="0.8" fill="#cfcfcf"/><circle cx="12.3" cy="58.1" r="0.5" fill="#4a4a4a"/><circle cx="19.7" cy="45.1" r="0.7" fill="#2e2e2e"/><circle cx="23.8" cy="45.6" r="0.4" fill="#e8e8e8"/><circle cx="39.9" cy="47.1" r="0.4" fill="#cfcfcf"/><circle cx="19.7" cy="45.9" r="0.6" fill="#5e5e5e"/><circle cx="43.3" cy="47.2" r="0.7" fill="#e8e8e8"/><circle cx="16.3" cy="46.6" r="0.7" fill="#cfcfcf"/><circle cx="19.4" cy="52.6" r="0.8" fill="#4a4a4a"/><circle cx="44.0" cy="46.1" r="0.5" fill="#1f1f1f"/><circle cx="38.6" cy="57.3" r="0.4" fill="#cfcfcf"/><circle cx="14.2" cy="50.5" r="0.4" fill="#4a4a4a"/><circle cx="23.3" cy="45.1" r="0.6" fill="#1f1f1f"/><circle cx="15.7" cy="55.0" r="0.4" fill="#2e2e2e"/><path d="M27 14c3-2.600 13-2.600 16 1 3 3 4 7 6 10 2 2 4 3.500 4.500 5.500-1 1.500-3 .5-4.500-1s-2.500-3.500-3.500-4.500c0 5-1 10-2.500 14l-1 4-16-4c-1.500-3-3-9-2.500-15 .3-4.500 1.500-8 3.500-10z" fill="#252525"/><path d="M29.500 22c.5-2.500 2.500-4 4-4s3.500 1.500 4 4l.8 5c.2 2.500-2 4.500-4.800 4.500s-5-2-4.800-4.500z" fill="#777"/><path d="M32.800 13.500l1.200 0 .6 6-2.200 0z" fill="#6a6a6a"/><ellipse cx="33.500" cy="26.800" rx="2.500" ry="1.900" fill="#141414"/><path d="M31 30.500q2.500 1.600 5 0l-.4 2.600q-2.100 1-4.200 0z" fill="#1c1c1c"/><circle cx="29.300" cy="20" r="1" fill="#050505"/><circle cx="38" cy="20.400" r="1" fill="#050505"/><circle cx="29.600" cy="19.700" r=".3" fill="#bbb"/><circle cx="38.300" cy="20.100" r=".3" fill="#bbb"/><path d="M25.800 37.500l8 4 8.600-1.600" stroke="#3c3c3c" stroke-width="1.500" fill="none"/><circle cx="33.600" cy="42.600" r="1.600" fill="#d2d2d2"/></g></svg></div>
<svg class="ico" viewBox="0 0 36 28"><rect x="2" y="2" width="32" height="24" rx="4" fill="none" stroke="#dcdcdc" stroke-width="4"/><circle cx="17" cy="9" r="3" fill="#dcdcdc"/><path d="M2.500 21.800l7.400-5.700 5.800 4.300 10.500-8.500 7.300 5.300" fill="none" stroke="#dcdcdc" stroke-width="4" stroke-linejoin="round"/></svg>
<span id="t_fab" class="t w5" style="left:310.0px;top:26.5px;transform:scaleX(1.1282);color:#dedede;">fabian-gieske-1413257-unsplash.jpg</span>
<span id="m_fab" class="t w6" style="left:1226.0px;top:26.0px;transform:scaleX(1.0728);color:#e0e0e0;">Image</span>
<div class="badge no"></div>
<span id="a_fab" class="t w7" style="left:1545.8px;top:26.6px;transform:scaleX(1.1224);color:#191919;">Rejected</span>
<span id="d_fab" class="t " style="left:1779.6px;top:26.0px;transform:scaleX(1.0497);color:#a0a0a0;">12-08-2025 11:44</span>
<div class="pill" style="width:161.0px"></div>
<span id="p_fab" class="t w5" style="left:2222.0px;top:26.0px;transform:scaleX(1.0511);color:#e0e0e0;">745.07 KB</span>
<div class="dots"><i></i></div>
</div>
<div class="row" style="top:688px">
<div class="cb"></div>
<div class="th"><svg style="left:8px;width:90px" viewBox="0 0 90 60" preserveAspectRatio="none"><defs><clipPath id="cp90008"><rect width="90" height="60"/></clipPath></defs><g clip-path="url(#cp90008)"><rect width="90" height="60" fill="#3cb3da"/><rect width="90" height="20" fill="#45b8dc" opacity=".6"/><path d="M0 42.300l90-15.900v33.600h-90z" fill="#f7b92f"/><path d="M0 42.300l90-15.900v1l-90 15.900z" fill="#e0a637" opacity=".6"/><path d="M52.500 33.500c.5-5 2-9 4-9.500s3 4 4.500 9.500c1.500 1 2.500 2.500 2 3.500s-3 1.500-5.500 2.500l-1.500-10M62.500 31c.5-5 2-8.500 4.500-8.500s3.500 4 4.500 9.500c1.500 1 2.500 2.500 1.500 3.500s-3 1.500-5.500 2l-1.500-10" stroke="#2d3a4e" stroke-width=".9" fill="none"/></g></svg></div>
<svg class="ico" viewBox="0 0 36 28"><rect x="2" y="2" width="32" height="24" rx="4" fill="none" stroke="#dcdcdc" stroke-width="4"/><circle cx="17" cy="9" r="3" fill="#dcdcdc"/><path d="M2.500 21.800l7.400-5.700 5.800 4.300 10.500-8.500 7.300 5.300" fill="none" stroke="#dcdcdc" stroke-width="4" stroke-linejoin="round"/></svg>
<span id="t_eti" class="t w5" style="left:310.0px;top:26.5px;transform:scaleX(1.1612);color:#dedede;">etienne-girardet-360034-unsplash.jpg</span>
<span id="m_eti" class="t w6" style="left:1226.0px;top:26.0px;transform:scaleX(1.0728);color:#e0e0e0;">Image</span>
<div class="badge ok"></div>
<span id="a_eti" class="t w7" style="left:1545.6px;top:26.6px;transform:scaleX(1.1520);color:#191919;">Approved</span>
<span id="d_eti" class="t " style="left:1779.6px;top:26.0px;transform:scaleX(1.0497);color:#a0a0a0;">12-08-2025 11:44</span>
<div class="pill" style="width:116.6px"></div>
<span id="p_eti" class="t w5" style="left:2222.0px;top:26.0px;transform:scaleX(1.0399);color:#e0e0e0;">3.7 MB</span>
<div class="dots"><i></i></div>
</div>
<div class="row" style="top:804px">
<div class="cb"></div>
<div class="th"><svg style="left:9px;width:88px" viewBox="0 0 88 60" preserveAspectRatio="none"><defs><linearGradient id="ge" x1="0" y1="0" x2="1" y2="1"><stop offset="0" stop-color="#dcd6d2"/><stop offset=".5" stop-color="#d6d1d2"/><stop offset="1" stop-color="#d9d3d0"/></linearGradient><filter id="be1" x="-30%" y="-30%" width="160%" height="160%"><feGaussianBlur stdDeviation="0.3"/></filter></defs><rect width="88" height="60" fill="url(#ge)"/><g filter="url(#be1)"><path d="M4.7 35.1C3.7 43.5 5.0 50.0 3.9 61" stroke="#93a37f" stroke-width=".9" fill="none"/><path d="M9.5 36.9C10.0 45.5 6.9 50.0 6.6 61" stroke="#93a37f" stroke-width=".9" fill="none"/><path d="M13.1 24.3C12.1 32.7 11.5 50.0 16.1 61" stroke="#93a37f" stroke-width=".9" fill="none"/><path d="M20.3 31.6C20.5 39.5 20.6 50.0 19.7 61" stroke="#6f875c" stroke-width=".9" fill="none"/><path d="M29.0 20.9C27.9 28.6 26.9 50.0 31.6 61" stroke="#93a37f" stroke-width=".9" fill="none"/><path d="M27.7 36.5C28.7 44.9 28.7 50.0 25.1 61" stroke="#7d9068" stroke-width=".9" fill="none"/><path d="M31.8 34.5C31.0 42.8 29.0 50.0 34.0 61" stroke="#93a37f" stroke-width=".9" fill="none"/><path d="M39.2 22.3C39.6 30.7 41.7 50.0 38.5 61" stroke="#93a37f" stroke-width=".9" fill="none"/><path d="M44.6 19.8C44.2 28.0 46.4 50.0 44.3 61" stroke="#6f875c" stroke-width=".9" fill="none"/><path d="M34.5 42.9C36.0 51.0 32.1 50.0 32.3 61" stroke="#6f875c" stroke-width=".9" fill="none"/><path d="M40.5 44.2C39.5 52.6 41.5 50.0 42.2 61" stroke="#8a9a74" stroke-width=".9" fill="none"/><path d="M47.3 45.7C47.0 54.3 49.3 50.0 47.7 61" stroke="#93a37f" stroke-width=".9" fill="none"/><path d="M18.9 45.0C19.2 53.6 21.3 50.0 20.0 61" stroke="#7d9068" stroke-width=".9" fill="none"/><path d="M8.8 51.3C10.2 59.7 11.7 50.0 9.8 61" stroke="#6f875c" stroke-width=".9" fill="none"/><path d="M46.0 38.6C46.8 46.9 45.0 50.0 46.3 61" stroke="#7d9068" stroke-width=".9" fill="none"/><path d="M50.3 29.8C51.2 38.1 48.6 50.0 52.3 61" stroke="#8a9a74" stroke-width=".9" fill="none"/><path d="M58.8 25.1C57.9 32.7 56.2 50.0 60.9 61" stroke="#93a37f" stroke-width=".9" fill="none"/><path d="M62.2 31.7C60.6 40.1 64.0 50.0 61.7 61" stroke="#6f875c" stroke-width=".9" fill="none"/><path d="M60.8 40.3C58.9 47.6 60.4 50.0 60.3 61" stroke="#7d9068" stroke-width=".9" fill="none"/><path d="M73.0 20.4C71.2 28.0 73.7 50.0 70.3 61" stroke="#8a9a74" stroke-width=".9" fill="none"/><path d="M70.7 28.1C70.9 36.8 73.2 50.0 69.4 61" stroke="#6f875c" stroke-width=".9" fill="none"/><path d="M68.2 37.6C70.2 46.2 67.1 50.0 65.7 61" stroke="#7d9068" stroke-width=".9" fill="none"/><path d="M79.7 39.8C81.5 48.2 82.5 50.0 78.4 61" stroke="#8a9a74" stroke-width=".9" fill="none"/><path d="M82.4 24.7C81.0 32.7 79.7 50.0 84.6 61" stroke="#8a9a74" stroke-width=".9" fill="none"/><path d="M76.4 34.0C75.8 42.8 74.2 50.0 78.6 61" stroke="#93a37f" stroke-width=".9" fill="none"/><path d="M24.0 38.9C23.8 48.0 24.1 50.0 24.9 61" stroke="#7d9068" stroke-width=".9" fill="none"/><path d="M65.0 26.0C65.5 35.0 67.6 50.0 65.0 61" stroke="#93a37f" stroke-width=".9" fill="none"/><path d="M6.0 40.1L6.9 61" stroke="#869a72" stroke-width=".8"/><circle cx="6.9" cy="35.0" r="1" fill="#50663c"/><path d="M16.0 34.1L15.2 61" stroke="#869a72" stroke-width=".8"/><circle cx="15.7" cy="40.6" r="1" fill="#50663c"/><path d="M23.0 45.8L22.3 61" stroke="#869a72" stroke-width=".8"/><circle cx="22.8" cy="37.4" r="1" fill="#50663c"/><path d="M33.0 32.1L33.5 61" stroke="#869a72" stroke-width=".8"/><circle cx="32.7" cy="33.6" r="1" fill="#50663c"/><path d="M37.0 44.7L37.4 61" stroke="#869a72" stroke-width=".8"/><circle cx="36.6" cy="35.8" r="1" fill="#50663c"/><path d="M43.0 39.4L44.8 61" stroke="#869a72" stroke-width=".8"/><circle cx="42.0" cy="33.9" r="1" fill="#50663c"/><path d="M52.0 40.0L51.2 61" stroke="#869a72" stroke-width=".8"/><circle cx="52.2" cy="30.8" r="1" fill="#50663c"/><path d="M55.0 33.0L56.0 61" stroke="#869a72" stroke-width=".8"/><circle cx="55.7" cy="32.2" r="1" fill="#50663c"/><path d="M66.0 42.6L64.4 61" stroke="#869a72" stroke-width=".8"/><circle cx="66.6" cy="43.5" r="1" fill="#50663c"/><path d="M72.0 40.9L70.5 61" stroke="#869a72" stroke-width=".8"/><circle cx="72.0" cy="38.5" r="1" fill="#50663c"/><path d="M75.0 34.3L74.3 61" stroke="#869a72" stroke-width=".8"/><circle cx="75.4" cy="38.4" r="1" fill="#50663c"/><path d="M85.0 31.6L85.4 61" stroke="#869a72" stroke-width=".8"/><circle cx="85.9" cy="38.8" r="1" fill="#50663c"/><ellipse cx="4.7" cy="33.5" rx="2.6" ry="2.2" fill="#e8792b"/><ellipse cx="9.5" cy="35.5" rx="2.4" ry="2.0" fill="#f4efe6"/><ellipse cx="13.1" cy="22.7" rx="2.6" ry="2.2" fill="#efe2c8"/><ellipse cx="20.3" cy="29.5" rx="3.5" ry="3.0" fill="#e55f27"/><ellipse cx="29.0" cy="18.6" rx="3.8" ry="3.2" fill="#f6f1e8"/><ellipse cx="27.7" cy="34.9" rx="2.6" ry="2.2" fill="#f0c7b0"/><ellipse cx="31.8" cy="32.8" rx="2.8" ry="2.4" fill="#f3d9cc"/><ellipse cx="39.2" cy="20.7" rx="2.6" ry="2.2" fill="#f0a92a"/><ellipse cx="44.6" cy="18.0" rx="3.0" ry="2.5" fill="#ee8c27"/><ellipse cx="34.5" cy="41.0" rx="3.2" ry="2.7" fill="#f2cf3a"/><ellipse cx="40.5" cy="42.6" rx="2.6" ry="2.2" fill="#f7f2e4"/><ellipse cx="47.3" cy="44.3" rx="2.4" ry="2.0" fill="#e4572a"/><ellipse cx="18.9" cy="43.6" rx="2.4" ry="2.0" fill="#f3c232"/><ellipse cx="8.8" cy="49.7" rx="2.6" ry="2.2" fill="#f0d43c"/><ellipse cx="46.0" cy="36.9" rx="2.8" ry="2.4" fill="#f0b02c"/><ellipse cx="50.3" cy="28.1" rx="2.8" ry="2.4" fill="#f1d6cf"/><ellipse cx="58.8" cy="22.7" rx="4.0" ry="3.4" fill="#f3cf2f"/><ellipse cx="62.2" cy="30.1" rx="2.6" ry="2.2" fill="#f5efe6"/><ellipse cx="60.8" cy="37.6" rx="4.5" ry="3.8" fill="#f2c92e"/><ellipse cx="73.0" cy="18.0" rx="4.0" ry="3.4" fill="#e8662a"/><ellipse cx="70.7" cy="26.8" rx="2.2" ry="1.9" fill="#f0d84a"/><ellipse cx="68.2" cy="36.2" rx="2.4" ry="2.0" fill="#f2ddd6"/><ellipse cx="79.7" cy="38.2" rx="2.6" ry="2.2" fill="#e4622b"/><ellipse cx="82.4" cy="22.7" rx="3.4" ry="2.9" fill="#f3b52d"/><ellipse cx="76.4" cy="32.8" rx="2.0" ry="1.7" fill="#f0c6b8"/><ellipse cx="24.0" cy="38.0" rx="1.5" ry="1.3" fill="#e3602a"/><ellipse cx="65.0" cy="25.0" rx="1.6" ry="1.4" fill="#f4f0ea"/><circle cx="29.500" cy="18.500" r="1.200" fill="#f0c52e"/><circle cx="58.800" cy="23.500" r="1.300" fill="#d9a81e"/><circle cx="60.800" cy="38.500" r="1.500" fill="#d8a41c"/></g></svg></div>
<svg class="ico" viewBox="0 0 36 28"><rect x="2" y="2" width="32" height="24" rx="4" fill="none" stroke="#dcdcdc" stroke-width="4"/><circle cx="17" cy="9" r="3" fill="#dcdcdc"/><path d="M2.500 21.800l7.400-5.700 5.800 4.300 10.500-8.500 7.300 5.300" fill="none" stroke="#dcdcdc" stroke-width="4" stroke-linejoin="round"/></svg>
<span id="t_erol" class="t w5" style="left:310.0px;top:26.5px;transform:scaleX(1.1291);color:#dedede;">erol-ahmed-104251-unsplash.jpg</span>
<span id="m_erol" class="t w6" style="left:1226.0px;top:26.0px;transform:scaleX(1.0728);color:#e0e0e0;">Image</span>
<span id="d_erol" class="t " style="left:1779.6px;top:26.0px;transform:scaleX(1.0497);color:#a0a0a0;">12-08-2025 11:44</span>
<div class="pill" style="width:135.6px"></div>
<span id="p_erol" class="t w5" style="left:2222.0px;top:26.0px;transform:scaleX(1.0701);color:#e0e0e0;">5.83 MB</span>
<div class="dots"><i></i></div>
</div>
<div class="row" style="top:920px">
<div class="cb"></div>
<div class="th"><svg style="left:8px;width:90px" viewBox="0 0 90 60" preserveAspectRatio="none"><defs><filter id="bm1" x="-30%" y="-30%" width="160%" height="160%"><feGaussianBlur stdDeviation="1.8"/></filter><filter id="bm2" x="-30%" y="-30%" width="160%" height="160%"><feGaussianBlur stdDeviation="0.6"/></filter><filter id="bm3" x="-30%" y="-30%" width="160%" height="160%"><feGaussianBlur stdDeviation="0.5"/></filter><clipPath id="cp90008"><rect width="90" height="60"/></clipPath></defs><g clip-path="url(#cp90008)"><rect width="90" height="60" fill="#0b0516"/><g filter="url(#bm1)"><rect x="0" y="9" width="34" height="18" fill="#1f6f86"/><rect x="12" y="14" width="10" height="10" fill="#37b5c4"/><rect x="54" y="11" width="14" height="13" fill="#1f7d90"/><rect x="70" y="13" width="12" height="16" fill="#5a2f88"/><rect x="0" y="24" width="60" height="7" fill="#1a1030"/><rect x="36" y="20" width="18" height="8" fill="#3b2a78"/></g><g filter="url(#bm2)"><rect x="21" y="20" width="9" height="4" fill="#f4fbff"/><rect x="30" y="26" width="4" height="3" fill="#fff"/><rect x="45" y="24.500" width="7" height="3" fill="#e9dcff"/><rect x="72" y="15.500" width="5" height="2.500" fill="#fff"/><rect x="78" y="13.500" width="3" height="2.500" fill="#f7eaff"/><rect x="10" y="18" width="3" height="2" fill="#bff"/><rect x="0" y="18" width="1.500" height="6" fill="#fff"/><path d="M16 17l3 5 3-5" stroke="#7ff" stroke-width=".8" fill="none"/><rect x="74" y="20" width="1" height="9" fill="#d9c8ff"/></g><path d="M0 30.500l77 .5 13-2v31h-90z" fill="#2a0b2c"/><path d="M0 45l77-14 -20 29h-57z" fill="#5a1248" opacity=".75"/><path d="M60 60l17-29 13 1v28z" fill="#2b1340"/><circle cx="66.6" cy="51.9" r="0.6" fill="#d6bff5"/><circle cx="85.6" cy="59.7" r="0.5" fill="#b48ae6"/><circle cx="76.1" cy="40.1" r="0.3" fill="#6a3aa8"/><circle cx="88.1" cy="45.1" r="0.4" fill="#b48ae6"/><circle cx="87.8" cy="52.0" r="0.5" fill="#d6bff5"/><circle cx="79.2" cy="34.9" r="0.4" fill="#d6bff5"/><circle cx="81.4" cy="50.9" r="0.7" fill="#8c5bd0"/><circle cx="66.3" cy="55.3" r="0.3" fill="#8c5bd0"/><circle cx="74.7" cy="48.4" r="0.4" fill="#d6bff5"/><circle cx="66.2" cy="51.3" r="0.5" fill="#b48ae6"/><circle cx="80.9" cy="54.9" r="0.6" fill="#8c5bd0"/><circle cx="85.2" cy="39.2" r="0.7" fill="#d6bff5"/><circle cx="70.2" cy="58.8" r="0.5" fill="#6a3aa8"/><circle cx="89.9" cy="44.1" r="0.3" fill="#8c5bd0"/><circle cx="66.5" cy="52.6" r="0.7" fill="#8c5bd0"/><circle cx="75.8" cy="48.3" r="0.6" fill="#b48ae6"/><circle cx="78.0" cy="42.3" r="0.7" fill="#8c5bd0"/><circle cx="71.7" cy="58.1" r="0.4" fill="#6a3aa8"/><circle cx="87.8" cy="38.5" r="0.5" fill="#b48ae6"/><circle cx="81.1" cy="51.6" r="0.7" fill="#b48ae6"/><circle cx="73.4" cy="59.7" r="0.7" fill="#8c5bd0"/><circle cx="86.7" cy="46.8" r="0.5" fill="#b48ae6"/><circle cx="88.2" cy="40.4" r="0.5" fill="#d6bff5"/><circle cx="84.5" cy="54.1" r="0.5" fill="#6a3aa8"/><circle cx="70.1" cy="44.9" r="0.4" fill="#8c5bd0"/><circle cx="86.4" cy="50.8" r="0.4" fill="#b48ae6"/><circle cx="82.9" cy="46.5" r="0.4" fill="#d6bff5"/><circle cx="85.5" cy="54.7" r="0.7" fill="#d6bff5"/><circle cx="75.6" cy="57.5" r="0.5" fill="#b48ae6"/><circle cx="77.0" cy="41.2" r="0.6" fill="#8c5bd0"/><circle cx="82.0" cy="40.9" r="0.4" fill="#b48ae6"/><circle cx="85.8" cy="49.2" r="0.4" fill="#d6bff5"/><circle cx="83.0" cy="55.1" r="0.4" fill="#b48ae6"/><circle cx="65.9" cy="56.6" r="0.6" fill="#b48ae6"/><circle cx="70.5" cy="58.5" r="0.5" fill="#b48ae6"/><circle cx="79.4" cy="38.7" r="0.6" fill="#b48ae6"/><circle cx="81.9" cy="48.3" r="0.3" fill="#8c5bd0"/><circle cx="84.1" cy="34.2" r="0.5" fill="#8c5bd0"/><circle cx="73.1" cy="48.7" r="0.6" fill="#b48ae6"/><circle cx="69.1" cy="52.1" r="0.4" fill="#8c5bd0"/><circle cx="82.3" cy="59.8" r="0.6" fill="#d6bff5"/><circle cx="88.6" cy="36.6" r="0.5" fill="#6a3aa8"/><circle cx="89.1" cy="42.1" r="0.6" fill="#b48ae6"/><circle cx="63.8" cy="55.2" r="0.7" fill="#6a3aa8"/><circle cx="73.8" cy="56.6" r="0.6" fill="#d6bff5"/><circle cx="76.1" cy="58.6" r="0.6" fill="#d6bff5"/><circle cx="75.2" cy="47.3" r="0.7" fill="#8c5bd0"/><circle cx="74.1" cy="40.4" r="0.6" fill="#d6bff5"/><g filter="url(#bm3)" fill="none"><path d="M0 33l77-2" stroke="#f070b8" stroke-width="2"/><path d="M0 38.500l77-7.500" stroke="#e03a98" stroke-width="2"/><path d="M0 36l77-5" stroke="#ffd6f0" stroke-width=".9"/><path d="M0 51.500l77-20.500" stroke="#e23d9c" stroke-width="1.500"/><path d="M0 46l77-15" stroke="#8e1d6c" stroke-width="1.500"/><path d="M9.500 60l67.500-29" stroke="#ff86c8" stroke-width="1.100"/><path d="M17.500 60l59.500-29" stroke="#ffe9c8" stroke-width="1.100"/><path d="M50 33l27-2 13 0" stroke="#fff" stroke-width="1.200"/><path d="M77 31l13 4" stroke="#c07be8" stroke-width="1.500"/></g><path d="M0 .3l56 21" stroke="#f7f7ff" stroke-width="1.700"/><path d="M56 21.300l12 4" stroke="#cdd" stroke-width=".8"/><path d="M17 0l53 24" stroke="#a0204e" stroke-width=".7"/><path d="M28 0l2 6" stroke="#1f9a98" stroke-width="1" opacity=".6"/></g></svg></div>
<svg class="ico" viewBox="0 0 36 28"><rect x="2" y="2" width="32" height="24" rx="4" fill="none" stroke="#dcdcdc" stroke-width="4"/><circle cx="17" cy="9" r="3" fill="#dcdcdc"/><path d="M2.500 21.800l7.400-5.700 5.800 4.300 10.500-8.500 7.300 5.300" fill="none" stroke="#dcdcdc" stroke-width="4" stroke-linejoin="round"/></svg>
<span id="t_emre" class="t w5" style="left:310.0px;top:26.5px;transform:scaleX(1.1409);color:#dedede;">emre-karatas-194353-unsplash.jpg</span>
<span id="m_emre" class="t w6" style="left:1226.0px;top:26.0px;transform:scaleX(1.0728);color:#e0e0e0;">Image</span>
<span id="d_emre" class="t " style="left:1779.6px;top:26.0px;transform:scaleX(1.0497);color:#a0a0a0;">12-08-2025 11:44</span>
<div class="pill" style="width:137.0px"></div>
<span id="p_emre" class="t w5" style="left:2222.0px;top:26.0px;transform:scaleX(1.0838);color:#e0e0e0;">3.48 MB</span>
<div class="dots"><i></i></div>
</div>
<div class="row" style="top:1036px">
<div class="cb"></div>
<div class="th"><svg style="left:8px;width:90px" viewBox="0 0 90 60" preserveAspectRatio="none"><defs><filter id="bb1" x="-30%" y="-30%" width="160%" height="160%"><feGaussianBlur stdDeviation="2.6"/></filter><filter id="tb1" x="0" y="0" width="100%" height="100%" color-interpolation-filters="sRGB"><feTurbulence type="fractalNoise" baseFrequency=".07 .09" numOctaves="4" seed="12"/><feColorMatrix values="0 0 0 0 .50  0 0 0 0 .40  0 0 0 0 .54  3.200 0 0 0 -1.500"/></filter><filter id="tb2" x="0" y="0" width="100%" height="100%" color-interpolation-filters="sRGB"><feTurbulence type="fractalNoise" baseFrequency=".06 .08" numOctaves="4" seed="31"/><feColorMatrix values="0 0 0 0 .98  0 0 0 0 .92  0 0 0 0 .96  3.200 0 0 0 -1.700"/></filter><clipPath id="cp90008"><rect width="90" height="60"/></clipPath></defs><g clip-path="url(#cp90008)"><rect width="90" height="60" fill="#d3c3d6"/><g filter="url(#bb1)"><ellipse cx="44" cy="4" rx="40" ry="8" fill="#dcc6da"/><ellipse cx="78" cy="26" rx="16" ry="16" fill="#b9bacd"/><ellipse cx="62" cy="14" rx="12" ry="8" fill="#d9c0d6"/><ellipse cx="36" cy="16" rx="10" ry="9" fill="#efc9d2"/><ellipse cx="33" cy="32" rx="9" ry="11" fill="#f5d6cc"/><ellipse cx="48" cy="22" rx="9" ry="9" fill="#e8c3d4"/><ellipse cx="12" cy="40" rx="14" ry="8" fill="#d6d0e2"/><ellipse cx="3" cy="12" rx="6" ry="10" fill="#a889a9"/><ellipse cx="8" cy="27" rx="6" ry="6" fill="#b393b2"/><ellipse cx="44" cy="39" rx="7" ry="4" fill="#8c7292"/><ellipse cx="50" cy="46" rx="4" ry="4" fill="#9a81a0"/><ellipse cx="17" cy="44" rx="6" ry="3" fill="#b79ab7"/><ellipse cx="10" cy="57" rx="17" ry="7" fill="#6f6179"/><ellipse cx="32" cy="60" rx="10" ry="4" fill="#85738f"/><ellipse cx="54" cy="58" rx="8" ry="5" fill="#776883"/><ellipse cx="76" cy="54" rx="10" ry="6" fill="#c9b2cc"/><ellipse cx="70" cy="44" rx="10" ry="5" fill="#d9c9da"/></g><rect width="90" height="60" filter="url(#tb1)" opacity=".4"/><rect width="90" height="60" filter="url(#tb2)" opacity=".45"/></g></svg></div>
<svg class="ico" viewBox="0 0 36 28"><rect x="2" y="2" width="32" height="24" rx="4" fill="none" stroke="#dcdcdc" stroke-width="4"/><circle cx="17" cy="9" r="3" fill="#dcdcdc"/><path d="M2.500 21.800l7.400-5.700 5.800 4.300 10.500-8.500 7.300 5.300" fill="none" stroke="#dcdcdc" stroke-width="4" stroke-linejoin="round"/></svg>
<span id="t_eber" class="t w5" style="left:310.0px;top:26.5px;transform:scaleX(1.1391);color:#dedede;">eberhard-grossgasteiger-538519-unsplash.jpg</span>
<span id="m_eber" class="t w6" style="left:1226.0px;top:26.0px;transform:scaleX(1.0728);color:#e0e0e0;">Image</span>
<span id="d_eber" class="t " style="left:1779.6px;top:26.0px;transform:scaleX(1.0497);color:#a0a0a0;">12-08-2025 11:44</span>
<div class="pill" style="width:147.0px"></div>
<span id="p_eber" class="t w5" style="left:2222.0px;top:26.0px;transform:scaleX(1.0693);color:#e0e0e0;">739.4 KB</span>
<div class="dots"><i></i></div>
</div>
<div class="row" style="top:1152px">
<div class="cb"></div>
<div class="th"><svg style="left:23px;width:60px" viewBox="0 0 60 60" preserveAspectRatio="none"><defs><filter id="bd1" x="-30%" y="-30%" width="160%" height="160%"><feGaussianBlur stdDeviation="0.35"/></filter><clipPath id="cp60023"><rect width="60" height="60"/></clipPath></defs><g clip-path="url(#cp60023)"><rect width="60" height="60" fill="#fefefe"/><g filter="url(#bd1)"><g fill="#161616"><rect x="17.200" y="24.800" width="2.200" height="6"/><rect x="20.200" y="25.200" width="1.500" height="5.600"/><rect x="22.300" y="24" width="6.200" height="6.800" rx="2.600"/><rect x="29.200" y="24.400" width="2.600" height="6.400"/><rect x="28.800" y="23" width="2" height="1.500"/><circle cx="40.600" cy="26.500" r="4"/><circle cx="40.500" cy="37" r="2.800"/></g><ellipse cx="25.400" cy="27.600" rx="1.500" ry="2" fill="#aaa"/><path d="M39 25l4 1.600-4 1.800z" fill="#e8e8e8"/><circle cx="40.500" cy="37" r="1.100" fill="#f4f4f4"/><rect x="18" y="35.800" width="5.800" height="4" fill="#5a5a5a"/><rect x="26.200" y="35.800" width="5.800" height="4" fill="#2c2c2c"/><rect x="19" y="36.800" width="2" height="1.500" fill="#bbb"/><rect x="28.500" y="36.800" width="2" height="1.500" fill="#888"/></g></g></svg></div>
<svg class="ico" viewBox="0 0 36 28"><rect x="2" y="2" width="32" height="24" rx="4" fill="none" stroke="#dcdcdc" stroke-width="4"/><circle cx="17" cy="9" r="3" fill="#dcdcdc"/><path d="M2.500 21.800l7.400-5.700 5.800 4.300 10.500-8.500 7.300 5.300" fill="none" stroke="#dcdcdc" stroke-width="4" stroke-linejoin="round"/></svg>
<span id="t_dmi" class="t w5" style="left:310.0px;top:26.5px;transform:scaleX(1.1521);color:#dedede;">dmitrii-matiushchenko-1393300-unsplash.jpg</span>
<span id="m_dmi" class="t w6" style="left:1226.0px;top:26.0px;transform:scaleX(1.0728);color:#e0e0e0;">Image</span>
<span id="d_dmi" class="t " style="left:1779.6px;top:26.0px;transform:scaleX(1.0497);color:#a0a0a0;">12-08-2025 11:44</span>
<div class="pill" style="width:171.0px"></div>
<span id="p_dmi" class="t w5" style="left:2222.0px;top:26.0px;transform:scaleX(1.0088);color:#e0e0e0;">1017.84 KB</span>
<div class="dots"><i></i></div>
</div>
</div>
<div class="abs" style="left:0;top:250px;width:2994px;height:66px;background:#191919"></div>
<div class="sep" style="left:1242px"></div>
<div class="sep" style="left:1549px"></div>
<div class="sep" style="left:1795px"></div>
<div class="sep" style="left:2225px"></div>
<span id="h_title" class="t f24 w6" style="left:279.2px;top:249.5px;transform:scaleX(1.1509);color:#9c9c9c;">Title</span>
<svg class="abs" style="left:346.1px;top:263px" width="44" height="34" viewBox="0 0 44 34"><path d="M10 5.800v22.800M4.400 23l5.600 5.600 5.600-5.600M30 28.600v-22.800M24.400 11.400l5.600-5.600 5.600 5.600" fill="none" stroke="#9c9c9c" stroke-width="4.500" stroke-linecap="round" stroke-linejoin="round"/></svg>
<span id="h_media" class="t f24 w6" style="left:1261.9px;top:249.5px;transform:scaleX(1.1044);color:#9c9c9c;">Media Type</span>
<svg class="abs" style="left:1411.3px;top:263px" width="44" height="34" viewBox="0 0 44 34"><path d="M10 5.800v22.800M4.400 23l5.600 5.600 5.600-5.600M30 28.600v-22.800M24.400 11.400l5.600-5.600 5.600 5.600" fill="none" stroke="#9c9c9c" stroke-width="4.500" stroke-linecap="round" stroke-linejoin="round"/></svg>
<span id="h_appr" class="t f24 w6" style="left:1569.8px;top:249.5px;transform:scaleX(1.1094);color:#9c9c9c;">Approval</span>
<svg class="abs" style="left:1688.4px;top:263px" width="44" height="34" viewBox="0 0 44 34"><path d="M10 5.800v22.800M4.400 23l5.600 5.600 5.600-5.600M30 28.600v-22.800M24.400 11.400l5.600-5.600 5.600 5.600" fill="none" stroke="#9c9c9c" stroke-width="4.500" stroke-linecap="round" stroke-linejoin="round"/></svg>
<span id="h_crea" class="t f24 w6" style="left:1815.3px;top:249.5px;transform:scaleX(1.1027);color:#9c9c9c;">Created</span>
<svg class="abs" style="left:1923.5px;top:263px" width="44" height="34" viewBox="0 0 44 34"><path d="M10 5.800v22.800M4.400 23l5.600 5.600 5.600-5.600M30 28.600v-22.800M24.400 11.400l5.600-5.600 5.600 5.600" fill="none" stroke="#9c9c9c" stroke-width="4.500" stroke-linecap="round" stroke-linejoin="round"/></svg>
<span id="h_fi" class="t f24 w6" style="left:2245.8px;top:249.5px;transform:scaleX(1.0215);color:#9c9c9c;">Fi</span>
<div class="abs" style="left:2264px;top:184px;width:720px;height:318px;border-radius:20px;background:#fff;box-shadow:0 6px 24px rgba(0,0,0,.22)"></div>
<div class="abs" style="left:2266px;top:186px;width:716px;height:314px;border-radius:18px;background:#f5f5f5;border:4px solid #2259c7"></div>
<div class="abs" style="left:2284px;top:272px;width:680px;height:2px;background:#dcdcdc"></div>
<div class="abs" style="left:2588px;top:290px;width:360px;height:80px;border-radius:16px;background:#ebebeb"></div>
<div class="abs" style="left:2596px;top:298px;width:83px;height:64px;border-radius:12px;background:#d1d1d1"></div>
<div class="abs" style="left:2588px;top:386px;width:360px;height:80px;border-radius:16px;background:#ebebeb"></div>
<div class="abs" style="left:2770px;top:394px;width:170px;height:64px;border-radius:12px;background:#d1d1d1"></div>

<span id="pp_app" class="t f24 w5" style="left:2300.9px;top:209.5px;transform:scaleX(1.0631);color:#4a4a4a;">Appearance</span>
<span id="pp_only" class="t f24" style="left:2446.5px;top:209.5px;transform:scaleX(1.0512);color:#8e8e8e;">Only visible to you</span>
<span id="pp_ps" class="t w7" style="left:2300.9px;top:300.0px;transform:scaleX(1.0997);color:#0a0a0a;">Page size</span>
<span id="pp_den" class="t w7" style="left:2300.9px;top:396.0px;transform:scaleX(1.1496);color:#0a0a0a;">Density</span>
<span id="pp_25" class="t w7" style="left:2621.0px;top:300.0px;transform:scaleX(1.1192);color:#0a0a0a;">25</span>
<span id="pp_50" class="t w5" style="left:2707.5px;top:300.0px;transform:scaleX(1.1113);color:#555;">50</span>
<span id="pp_75" class="t w5" style="left:2795.0px;top:300.0px;transform:scaleX(1.0460);color:#555;">75</span>
<span id="pp_100" class="t w5" style="left:2873.5px;top:300.0px;transform:scaleX(1.0678);color:#555;">100</span>
<span id="pp_spa" class="t w5" style="left:2619.2px;top:396.0px;transform:scaleX(1.0916);color:#555;">Spacious</span>
<span id="pp_com" class="t w7" style="left:2794.0px;top:396.0px;transform:scaleX(1.1504);color:#0a0a0a;">Compact</span>
<div class="abs" style="left:0;top:1534px;width:2994px;height:118px;background:#191919"></div>
<svg class="abs" style="left:1335px;top:1580px" width="40" height="52" viewBox="0 0 40 52"><path d="M26.900 10.600l-16.200 15.200 16.200 15.700" fill="none" stroke="#444" stroke-width="4" stroke-linecap="round" stroke-linejoin="round"/></svg>
<svg class="abs" style="left:1625px;top:1580px" width="40" height="52" viewBox="0 0 40 52"><path d="M12.900 10.600l16.200 15.200-16.200 15.700" fill="none" stroke="#999" stroke-width="4" stroke-linecap="round" stroke-linejoin="round"/></svg>
<span id="pg1" class="t w5" style="left:1444.5px;top:1576.0px;transform:scaleX(0.8498);color:#444;">1</span>
<span id="pg2" class="t w5" style="left:1540.2px;top:1576.0px;transform:scaleX(0.9937);color:#a8a8a8;">2</span>
</body></html>
